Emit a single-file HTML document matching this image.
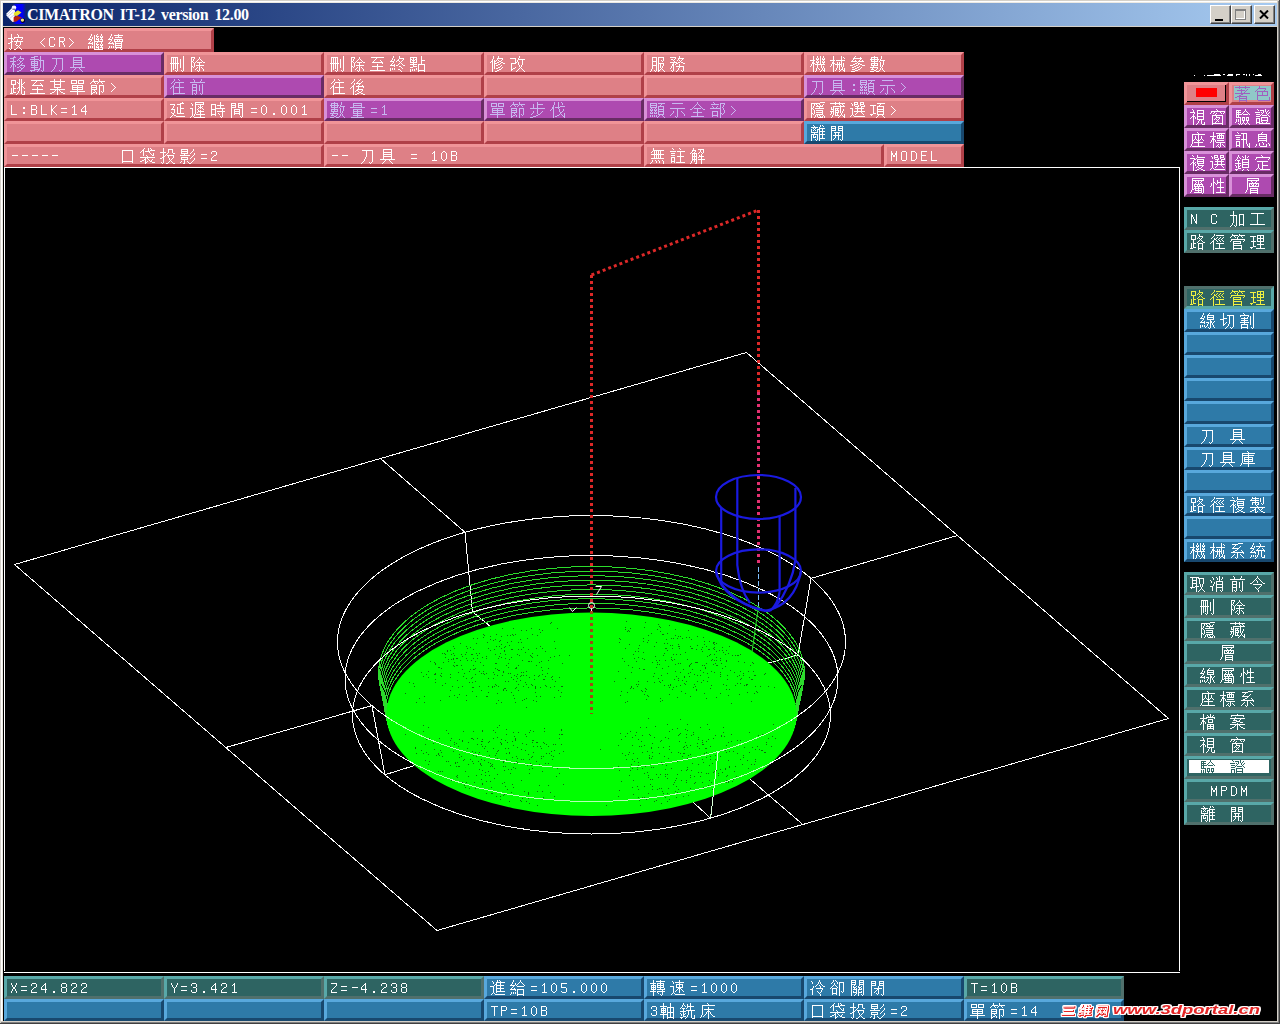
<!DOCTYPE html>
<html lang="zh-TW">
<head>
<meta charset="utf-8">
<title>CIMATRON IT-12 version 12.00</title>
<style>
html,body{margin:0;padding:0;}
body{width:1280px;height:1024px;background:#000;position:relative;overflow:hidden;font-family:"Liberation Mono","Liberation Serif",serif;}
.abs{position:absolute;}
.b{position:absolute;box-sizing:border-box;border:3px solid;font:16.66px/17px "Liberation Mono","Liberation Serif",serif;letter-spacing:0;color:#fff;white-space:pre;padding:1px 0 0 3px;}
.g{display:inline-block;width:20px;height:16px;vertical-align:top;position:relative;top:0;overflow:hidden;font-style:normal;font-size:16px;line-height:16px;letter-spacing:0;background:currentColor;-webkit-text-fill-color:transparent;}
.h{width:10px;top:-1px;}
.g2D{clip-path:path("M2 8h6v1h-6z")}
.g2E{clip-path:path("M3 12h2v2h-2z")}
.g30{clip-path:path("M3 4h2v1h-2zM5 5h1v1h-1zM2 5h1v1h-1zM6 6h1v6h-1zM1 6h1v6h-1zM5 12h1v1h-1zM2 12h1v1h-1zM3 13h2v1h-2z")}
.g31{clip-path:path("M4 4h1v1h-1zM3 5h2v1h-2zM2 6h1v1h-1zM4 6h1v7h-1zM2 13h5v1h-5z")}
.g32{clip-path:path("M2 4h4v1h-4zM1 5h1v2h-1zM6 5h1v3h-1zM4 8h2v1h-2zM3 9h1v1h-1zM2 10h1v1h-1zM1 11h1v2h-1zM1 13h6v1h-6z")}
.g33{clip-path:path("M2 4h4v1h-4zM1 5h1v2h-1zM6 5h1v3h-1zM3 8h3v1h-3zM6 9h1v4h-1zM1 11h1v2h-1zM2 13h4v1h-4z")}
.g34{clip-path:path("M5 4h1v1h-1zM4 5h2v1h-2zM3 6h1v1h-1zM2 7h1v1h-1zM5 6h1v4h-1zM1 8h1v2h-1zM1 10h6v1h-6zM5 11h1v3h-1z")}
.g35{clip-path:path("M1 4h6v1h-6zM1 5h1v3h-1zM1 8h5v1h-5zM6 9h1v4h-1zM1 12h1v1h-1zM2 13h4v1h-4z")}
.g38{clip-path:path("M2 4h4v1h-4zM6 5h1v3h-1zM1 5h1v3h-1zM2 8h4v1h-4zM6 9h1v4h-1zM1 9h1v4h-1zM2 13h4v1h-4z")}
.g3A{clip-path:path("M3 6h2v2h-2zM3 11h2v2h-2z")}
.g3C{clip-path:path("M6 5h1v1h-1zM5 6h1v1h-1zM4 7h1v1h-1zM3 8h1v1h-1zM2 9h1v1h-1zM3 10h1v1h-1zM4 11h1v1h-1zM5 12h1v1h-1zM6 13h1v1h-1z")}
.g3D{clip-path:path("M1 7h6v1h-6zM1 11h6v1h-6z")}
.g3E{clip-path:path("M1 5h1v1h-1zM2 6h1v1h-1zM3 7h1v1h-1zM4 8h1v1h-1zM5 9h1v1h-1zM4 10h1v1h-1zM3 11h1v1h-1zM2 12h1v1h-1zM1 13h1v1h-1z")}
.g42{clip-path:path("M1 4h5v1h-5zM6 5h1v3h-1zM1 5h1v3h-1zM1 8h5v1h-5zM6 9h1v4h-1zM1 9h1v4h-1zM1 13h5v1h-5z")}
.g43{clip-path:path("M2 4h4v1h-4zM6 5h1v2h-1zM1 5h1v8h-1zM6 11h1v2h-1zM2 13h4v1h-4z")}
.g44{clip-path:path("M1 4h4v1h-4zM5 5h1v1h-1zM6 6h1v6h-1zM1 5h1v8h-1zM5 12h1v1h-1zM1 13h4v1h-4z")}
.g45{clip-path:path("M1 4h6v1h-6zM1 5h1v3h-1zM1 8h5v1h-5zM1 9h1v4h-1zM1 13h6v1h-6z")}
.g4B{clip-path:path("M6 4h1v1h-1zM5 5h1v1h-1zM4 6h1v1h-1zM1 4h1v4h-1zM3 7h1v1h-1zM1 8h2v2h-2zM3 10h1v1h-1zM4 11h1v1h-1zM5 12h1v1h-1zM1 10h1v4h-1zM6 13h1v1h-1z")}
.g4C{clip-path:path("M1 4h1v9h-1zM1 13h6v1h-6z")}
.g4D{clip-path:path("M6 4h1v2h-1zM1 4h1v2h-1zM1 6h2v2h-2zM5 6h2v2h-2zM3 8h2v2h-2zM6 8h1v6h-1zM1 8h1v6h-1z")}
.g4E{clip-path:path("M1 4h1v1h-1zM1 5h2v2h-2zM3 7h1v2h-1zM6 4h1v7h-1zM4 9h1v2h-1zM5 11h2v2h-2zM1 7h1v7h-1zM6 13h1v1h-1z")}
.g4F{clip-path:path("M2 4h4v1h-4zM6 5h1v8h-1zM1 5h1v8h-1zM2 13h4v1h-4z")}
.g50{clip-path:path("M1 4h5v1h-5zM6 5h1v3h-1zM1 5h1v3h-1zM1 8h5v1h-5zM1 9h1v5h-1z")}
.g52{clip-path:path("M1 4h5v1h-5zM6 5h1v3h-1zM1 5h1v3h-1zM1 8h5v1h-5zM4 9h1v1h-1zM5 10h1v2h-1zM1 9h1v5h-1zM6 12h1v2h-1z")}
.g54{clip-path:path("M1 4h7v1h-7zM4 5h1v9h-1z")}
.g58{clip-path:path("M6 4h1v2h-1zM1 4h1v2h-1zM5 6h1v2h-1zM2 6h1v2h-1zM3 8h2v2h-2zM5 10h1v2h-1zM2 10h1v2h-1zM6 12h1v2h-1zM1 12h1v2h-1z")}
.g59{clip-path:path("M1 4h1v2h-1zM7 4h1v2h-1zM6 6h1v2h-1zM2 6h1v2h-1zM3 8h1v1h-1zM5 8h1v1h-1zM4 9h1v5h-1z")}
.g5A{clip-path:path("M1 4h6v1h-6zM6 5h1v2h-1zM5 7h1v1h-1zM4 8h1v1h-1zM3 9h1v1h-1zM2 10h1v1h-1zM1 11h1v2h-1zM1 13h6v1h-6z")}
.g4E09{clip-path:path("M1 2h13v1h-13zM2 7h11v1h-11zM0 13h15v1h-15z")}
.g4EE4{clip-path:path("M7 0h1v2h-1zM6 2h1v1h-1zM8 2h1v1h-1zM9 3h1v1h-1zM5 3h1v1h-1zM10 4h1v1h-1zM6 4h1v1h-1zM4 4h1v1h-1zM3 5h1v1h-1zM11 5h1v1h-1zM7 5h1v2h-1zM12 6h1v1h-1zM2 6h1v1h-1zM13 7h2v1h-2zM0 7h2v1h-2zM3 8h9v1h-9zM11 9h1v1h-1zM10 10h1v1h-1zM9 11h1v1h-1zM5 11h1v1h-1zM6 12h1v1h-1zM8 12h1v1h-1zM7 13h1v1h-1zM8 14h1v2h-1z")}
.g4F10{clip-path:path("M11 0h1v1h-1zM4 0h1v3h-1zM12 1h1v2h-1zM8 0h1v5h-1zM3 3h1v2h-1zM10 4h5v1h-5zM5 5h5v1h-5zM2 5h2v2h-2zM8 6h1v1h-1zM1 7h1v1h-1zM13 7h1v2h-1zM0 8h1v1h-1zM9 7h1v3h-1zM12 9h1v1h-1zM10 10h2v1h-2zM10 11h1v1h-1zM9 12h1v1h-1zM11 12h1v1h-1zM14 11h1v3h-1zM12 13h1v1h-1zM7 13h2v1h-2zM13 14h2v1h-2zM5 14h2v1h-2zM3 7h1v9h-1zM14 15h1v1h-1z")}
.g4FEE{clip-path:path("M8 0h1v2h-1zM3 0h1v3h-1zM7 2h6v1h-6zM12 3h1v1h-1zM7 3h1v1h-1zM2 3h1v2h-1zM11 4h1v1h-1zM8 4h1v1h-1zM6 4h1v1h-1zM4 4h1v1h-1zM1 5h2v1h-2zM9 5h2v1h-2zM4 5h2v1h-2zM0 6h1v1h-1zM11 6h2v1h-2zM7 6h2v1h-2zM4 6h1v1h-1zM13 7h2v1h-2zM10 7h1v1h-1zM4 7h3v1h-3zM8 8h2v1h-2zM11 9h1v1h-1zM6 9h2v1h-2zM10 10h1v1h-1zM8 11h2v1h-2zM12 11h1v1h-1zM4 8h1v5h-1zM11 12h1v1h-1zM6 12h2v1h-2zM9 13h2v1h-2zM7 14h2v1h-2zM2 6h1v10h-1zM5 15h2v1h-2z")}
.g5168{clip-path:path("M7 0h1v2h-1zM6 2h1v1h-1zM8 2h1v1h-1zM9 3h1v1h-1zM5 3h1v1h-1zM10 4h1v1h-1zM4 4h1v1h-1zM3 5h1v1h-1zM11 5h1v1h-1zM4 6h7v1h-7zM12 6h1v1h-1zM2 6h1v1h-1zM13 7h2v1h-2zM0 7h2v1h-2zM7 7h1v3h-1zM3 10h9v1h-9zM7 11h1v3h-1zM1 14h13v1h-13z")}
.g5177{clip-path:path("M3 1h9v1h-9zM3 2h1v2h-1zM11 2h1v2h-1zM3 4h9v1h-9zM3 5h1v1h-1zM11 5h1v1h-1zM3 6h9v1h-9zM3 7h1v1h-1zM11 7h1v1h-1zM3 8h9v1h-9zM3 9h1v2h-1zM11 9h1v2h-1zM0 11h15v1h-15zM9 12h1v1h-1zM5 12h1v1h-1zM10 13h1v1h-1zM4 13h1v1h-1zM3 14h1v1h-1zM11 14h1v1h-1zM12 15h1v1h-1zM2 15h1v1h-1z")}
.g51B7{clip-path:path("M9 0h1v2h-1zM1 1h1v1h-1zM10 2h1v2h-1zM2 2h1v2h-1zM8 2h1v2h-1zM11 4h1v1h-1zM7 4h1v1h-1zM12 5h1v1h-1zM6 5h1v1h-1zM9 5h1v1h-1zM13 6h2v1h-2zM5 6h1v1h-1zM3 6h1v2h-1zM10 6h1v2h-1zM6 8h7v1h-7zM2 8h1v1h-1zM12 9h1v1h-1zM0 9h3v1h-3zM11 10h1v2h-1zM7 11h1v1h-1zM10 12h1v1h-1zM8 12h1v1h-1zM9 13h1v1h-1zM2 10h1v5h-1zM10 14h1v2h-1z")}
.g5200{clip-path:path("M2 2h11v1h-11zM6 3h1v6h-1zM5 9h1v2h-1zM4 11h1v2h-1zM12 3h1v11h-1zM3 13h1v1h-1zM11 14h1v1h-1zM9 14h1v1h-1zM2 14h1v1h-1zM1 15h1v1h-1zM10 15h1v1h-1z")}
.g5207{clip-path:path("M7 2h7v1h-7zM3 0h1v5h-1zM3 5h4v1h-4zM0 6h4v1h-4zM6 9h1v1h-1zM9 3h1v8h-1zM3 7h1v4h-1zM5 10h1v1h-1zM3 11h2v1h-2zM8 11h1v2h-1zM3 12h1v1h-1zM13 3h1v11h-1zM7 13h1v1h-1zM6 14h1v1h-1zM12 14h1v1h-1zM10 14h1v1h-1zM11 15h1v1h-1zM5 15h1v1h-1z")}
.g522A{clip-path:path("M1 1h7v1h-7zM7 2h1v5h-1zM3 2h1v5h-1zM1 2h1v5h-1zM5 2h1v5h-1zM0 7h9v1h-9zM10 3h1v9h-1zM5 8h1v5h-1zM3 8h1v6h-1zM13 0h1v15h-1zM7 8h1v7h-1zM11 14h1v1h-1zM5 14h1v1h-1zM1 8h1v8h-1zM6 15h1v1h-1zM12 15h1v1h-1z")}
.g524D{clip-path:path("M3 0h1v1h-1zM11 0h1v2h-1zM4 1h1v2h-1zM10 2h1v1h-1zM0 3h15v1h-15zM2 5h5v1h-5zM6 6h1v2h-1zM2 6h1v2h-1zM2 8h5v1h-5zM6 9h1v2h-1zM2 9h1v2h-1zM9 6h1v6h-1zM2 11h5v1h-5zM12 5h1v10h-1zM6 12h1v3h-1zM10 14h1v1h-1zM4 14h1v1h-1zM2 12h1v4h-1zM11 15h1v1h-1zM5 15h1v1h-1z")}
.g5272{clip-path:path("M3 0h1v1h-1zM4 1h1v1h-1zM0 2h9v1h-9zM0 3h1v1h-1zM8 3h1v1h-1zM4 4h1v1h-1zM7 4h1v1h-1zM1 5h7v1h-7zM4 6h1v1h-1zM1 7h7v1h-7zM4 8h1v1h-1zM0 9h9v1h-9zM4 10h1v1h-1zM10 3h1v9h-1zM1 11h7v1h-7zM1 12h1v2h-1zM7 12h1v2h-1zM13 0h1v15h-1zM11 14h1v1h-1zM1 14h7v1h-7zM1 15h1v1h-1zM12 15h1v1h-1zM7 15h1v1h-1z")}
.g52A0{clip-path:path("M3 0h1v4h-1zM9 3h5v1h-5zM0 4h7v1h-7zM3 5h1v7h-1zM9 4h1v9h-1zM13 4h1v9h-1zM2 12h1v2h-1zM9 13h5v1h-5zM6 5h1v10h-1zM13 14h1v1h-1zM1 14h1v1h-1zM9 14h1v1h-1zM4 14h1v1h-1zM0 15h1v1h-1zM5 15h1v1h-1z")}
.g52D5{clip-path:path("M4 0h4v1h-4zM1 1h4v1h-4zM4 2h1v1h-1zM10 0h1v4h-1zM0 3h9v1h-9zM9 4h5v1h-5zM4 4h1v1h-1zM1 5h7v1h-7zM7 6h1v1h-1zM1 6h1v1h-1zM4 6h1v1h-1zM1 7h7v1h-7zM7 8h1v1h-1zM1 8h1v1h-1zM4 8h1v1h-1zM1 9h7v1h-7zM4 10h1v1h-1zM10 5h1v7h-1zM1 11h7v1h-7zM9 12h1v1h-1zM4 12h1v1h-1zM4 13h6v1h-6zM13 5h1v10h-1zM11 14h1v1h-1zM0 14h5v1h-5zM8 14h1v1h-1zM1 15h1v1h-1zM12 15h1v1h-1zM7 15h1v1h-1z")}
.g52D9{clip-path:path("M9 0h1v2h-1zM0 1h6v1h-6zM5 2h1v1h-1zM8 2h6v1h-6zM12 3h1v1h-1zM1 3h2v1h-2zM4 3h1v1h-1zM8 3h1v1h-1zM3 4h1v1h-1zM9 4h1v1h-1zM7 4h1v1h-1zM11 4h1v1h-1zM10 5h1v1h-1zM4 5h1v1h-1zM0 6h7v1h-7zM11 6h2v1h-2zM8 6h2v1h-2zM3 7h1v1h-1zM13 7h2v1h-2zM6 7h2v1h-2zM5 8h1v1h-1zM9 8h1v2h-1zM2 8h2v2h-2zM6 10h8v1h-8zM1 10h1v2h-1zM9 11h1v1h-1zM0 12h1v1h-1zM8 12h1v2h-1zM3 10h1v5h-1zM13 11h1v4h-1zM11 14h1v1h-1zM7 14h1v1h-1zM1 14h1v1h-1zM6 15h1v1h-1zM12 15h1v1h-1zM2 15h1v1h-1z")}
.g537B{clip-path:path("M5 0h1v1h-1zM3 0h1v2h-1zM6 1h1v1h-1zM9 2h5v1h-5zM2 2h1v1h-1zM7 2h1v2h-1zM1 3h1v1h-1zM4 3h1v2h-1zM3 5h1v1h-1zM5 5h1v1h-1zM6 6h1v1h-1zM2 6h1v1h-1zM1 7h1v1h-1zM7 7h1v1h-1zM0 8h1v1h-1zM2 8h5v1h-5zM13 3h1v9h-1zM11 11h1v1h-1zM6 9h1v4h-1zM2 9h1v4h-1zM12 12h1v1h-1zM2 13h5v1h-5zM6 14h1v1h-1zM2 14h1v1h-1zM9 3h1v13h-1z")}
.g53C3{clip-path:path("M5 0h1v1h-1zM10 1h1v1h-1zM4 1h1v1h-1zM3 2h9v1h-9zM3 3h1v1h-1zM10 3h1v1h-1zM12 4h1v1h-1zM5 4h1v1h-1zM9 4h1v1h-1zM2 4h1v1h-1zM1 5h6v1h-6zM8 5h6v1h-6zM7 6h1v1h-1zM8 7h2v1h-2zM5 7h2v1h-2zM3 8h2v1h-2zM10 8h2v1h-2zM8 8h1v1h-1zM6 9h2v1h-2zM0 9h3v1h-3zM12 9h3v1h-3zM9 10h1v1h-1zM4 10h2v1h-2zM11 11h1v1h-1zM7 11h2v1h-2zM2 11h2v1h-2zM10 12h1v1h-1zM5 12h2v1h-2zM2 13h3v1h-3zM8 13h2v1h-2zM5 14h3v1h-3zM1 15h4v1h-4z")}
.g53D6{clip-path:path("M0 1h9v1h-9zM8 2h6v1h-6zM6 2h1v2h-1zM2 2h1v2h-1zM2 4h5v1h-5zM6 5h1v2h-1zM2 5h1v2h-1zM9 3h1v5h-1zM13 3h1v5h-1zM2 7h5v1h-5zM6 8h1v2h-1zM12 8h1v3h-1zM10 8h1v3h-1zM2 8h1v3h-1zM5 10h4v1h-4zM0 11h5v1h-5zM11 11h1v2h-1zM1 12h1v1h-1zM12 13h1v1h-1zM10 13h1v1h-1zM9 14h1v1h-1zM13 14h1v1h-1zM6 11h1v5h-1zM14 15h1v1h-1zM8 15h1v1h-1z")}
.g53E3{clip-path:path("M2 2h11v1h-11zM12 3h1v10h-1zM2 3h1v10h-1zM2 13h11v1h-11zM12 14h1v1h-1zM2 14h1v1h-1z")}
.g55AE{clip-path:path("M1 1h6v1h-6zM8 1h6v1h-6zM6 2h1v2h-1zM1 2h1v2h-1zM13 2h1v2h-1zM8 2h1v2h-1zM1 4h6v1h-6zM8 4h6v1h-6zM2 6h11v1h-11zM12 7h1v1h-1zM7 7h1v1h-1zM2 7h1v1h-1zM2 8h11v1h-11zM12 9h1v1h-1zM7 9h1v1h-1zM2 9h1v1h-1zM2 10h11v1h-11zM7 11h1v1h-1zM0 12h15v1h-15zM7 13h1v3h-1z")}
.g5B9A{clip-path:path("M6 0h1v1h-1zM7 1h1v1h-1zM1 2h14v1h-14zM14 3h1v1h-1zM1 3h1v1h-1zM0 4h1v1h-1zM13 4h1v1h-1zM2 6h11v1h-11zM7 7h1v3h-1zM7 10h6v1h-6zM3 9h1v4h-1zM7 11h1v3h-1zM4 13h1v1h-1zM2 13h1v1h-1zM1 14h1v1h-1zM5 14h10v1h-10zM0 15h1v1h-1z")}
.g5C64{clip-path:path("M2 0h12v1h-12zM2 1h1v1h-1zM13 1h1v1h-1zM2 2h12v1h-12zM11 3h1v1h-1zM6 3h1v1h-1zM10 4h1v1h-1zM7 4h1v1h-1zM4 5h10v1h-10zM11 6h1v1h-1zM8 6h1v1h-1zM6 6h1v1h-1zM13 6h1v2h-1zM4 6h1v2h-1zM10 7h1v1h-1zM7 7h2v1h-2zM4 8h10v1h-10zM5 10h8v1h-8zM2 3h1v9h-1zM5 11h1v1h-1zM12 11h1v1h-1zM5 12h8v1h-8zM1 12h1v2h-1zM12 13h1v1h-1zM5 13h1v1h-1zM0 14h1v1h-1zM5 14h8v1h-8zM12 15h1v1h-1zM5 15h1v1h-1z")}
.g5C6C{clip-path:path("M2 0h12v1h-12zM2 1h1v1h-1zM13 1h1v1h-1zM2 2h12v1h-12zM11 3h1v1h-1zM5 3h1v1h-1zM6 4h1v1h-1zM10 4h1v1h-1zM8 3h1v3h-1zM11 5h1v1h-1zM5 5h1v1h-1zM4 6h9v1h-9zM12 7h1v1h-1zM7 7h1v1h-1zM9 7h1v1h-1zM4 7h1v1h-1zM4 8h10v1h-10zM5 9h1v1h-1zM8 9h1v1h-1zM2 3h1v8h-1zM4 10h8v1h-8zM11 11h1v1h-1zM8 11h1v1h-1zM5 11h1v1h-1zM2 11h2v1h-2zM5 12h7v1h-7zM1 12h1v2h-1zM11 13h1v1h-1zM8 13h1v1h-1zM13 9h1v6h-1zM0 14h1v1h-1zM4 14h8v1h-8zM12 15h1v1h-1z")}
.g5DE5{clip-path:path("M1 2h13v1h-13zM7 3h1v10h-1zM0 13h15v1h-15z")}
.g5E8A{clip-path:path("M7 0h1v1h-1zM8 1h1v1h-1zM2 2h13v1h-13zM8 4h1v2h-1zM4 6h10v1h-10zM8 7h1v1h-1zM7 8h3v1h-3zM6 9h1v2h-1zM10 9h1v2h-1zM2 3h1v9h-1zM11 11h1v1h-1zM5 11h1v1h-1zM12 12h1v1h-1zM4 12h1v1h-1zM1 12h1v2h-1zM3 13h1v1h-1zM13 13h2v1h-2zM0 14h1v1h-1zM8 9h1v7h-1z")}
.g5EA7{clip-path:path("M7 0h1v1h-1zM8 1h1v1h-1zM2 2h13v1h-13zM11 4h1v3h-1zM5 4h1v3h-1zM2 3h1v5h-1zM8 3h1v5h-1zM12 7h1v1h-1zM6 7h1v1h-1zM10 7h1v1h-1zM4 7h1v1h-1zM13 8h1v1h-1zM7 8h3v1h-3zM2 8h2v1h-2zM8 9h1v1h-1zM4 10h9v1h-9zM2 9h1v3h-1zM8 11h1v3h-1zM1 12h1v2h-1zM0 14h1v1h-1zM2 14h13v1h-13z")}
.g5EAB{clip-path:path("M7 0h1v1h-1zM8 1h1v1h-1zM2 2h13v1h-13zM2 3h1v1h-1zM8 3h1v1h-1zM2 4h12v1h-12zM8 5h1v1h-1zM4 6h9v1h-9zM12 7h1v1h-1zM4 7h1v1h-1zM8 7h1v1h-1zM4 8h9v1h-9zM12 9h1v1h-1zM4 9h1v1h-1zM8 9h1v1h-1zM4 10h9v1h-9zM2 5h1v7h-1zM8 11h1v1h-1zM3 12h12v1h-12zM1 12h1v2h-1zM0 14h1v1h-1zM8 13h1v3h-1z")}
.g5EF6{clip-path:path("M12 0h1v1h-1zM10 1h4v1h-4zM7 2h4v1h-4zM0 2h5v1h-5zM4 3h1v1h-1zM10 3h1v3h-1zM3 4h1v2h-1zM10 6h4v1h-4zM2 6h1v1h-1zM1 7h4v1h-4zM7 5h1v6h-1zM10 7h1v4h-1zM4 8h1v3h-1zM1 10h1v1h-1zM7 11h7v1h-7zM2 11h2v1h-2zM3 12h1v1h-1zM2 13h1v1h-1zM4 13h2v1h-2zM1 14h1v1h-1zM6 14h9v1h-9zM0 15h1v1h-1z")}
.g5F71{clip-path:path("M1 1h7v1h-7zM13 1h1v2h-1zM1 2h1v1h-1zM7 2h1v1h-1zM1 3h7v1h-7zM12 3h1v1h-1zM11 4h1v1h-1zM1 4h1v1h-1zM7 4h1v1h-1zM1 5h7v1h-7zM10 5h1v1h-1zM14 5h1v2h-1zM4 6h1v1h-1zM0 7h10v1h-10zM13 7h1v1h-1zM12 8h1v1h-1zM11 9h1v1h-1zM1 9h7v1h-7zM10 10h1v1h-1zM1 10h1v1h-1zM7 10h1v1h-1zM14 10h1v2h-1zM1 11h7v1h-7zM13 12h1v1h-1zM1 13h1v1h-1zM12 13h1v1h-1zM7 13h1v1h-1zM4 12h1v3h-1zM0 14h1v1h-1zM11 14h1v1h-1zM8 14h1v1h-1zM3 15h2v1h-2zM9 15h2v1h-2z")}
.g5F80{clip-path:path("M8 0h1v1h-1zM4 0h1v2h-1zM9 1h1v1h-1zM3 2h1v1h-1zM5 3h9v1h-9zM2 3h1v1h-1zM1 4h1v1h-1zM4 4h1v2h-1zM3 6h1v1h-1zM9 4h1v4h-1zM2 7h2v1h-2zM5 8h9v1h-9zM1 8h1v1h-1zM0 9h1v1h-1zM3 8h1v6h-1zM9 9h1v5h-1zM3 14h12v1h-12zM3 15h1v1h-1z")}
.g5F8C{clip-path:path("M10 0h1v1h-1zM4 0h1v2h-1zM9 1h1v1h-1zM3 2h1v1h-1zM12 2h1v1h-1zM8 2h1v1h-1zM11 3h1v1h-1zM7 3h1v1h-1zM2 3h1v1h-1zM1 4h1v1h-1zM6 4h5v1h-5zM4 4h1v2h-1zM9 5h1v1h-1zM3 6h1v1h-1zM12 6h1v1h-1zM8 6h1v1h-1zM6 7h8v1h-8zM2 7h2v1h-2zM1 8h1v1h-1zM13 8h1v1h-1zM8 8h1v2h-1zM0 9h1v1h-1zM7 10h6v1h-6zM6 11h2v1h-2zM12 11h1v1h-1zM11 12h1v1h-1zM5 12h1v1h-1zM8 12h1v1h-1zM9 13h2v1h-2zM11 14h2v1h-2zM7 14h2v1h-2zM3 8h1v8h-1zM13 15h2v1h-2zM5 15h2v1h-2z")}
.g5F91{clip-path:path("M4 0h1v2h-1zM6 1h8v1h-8zM3 2h1v1h-1zM10 3h1v1h-1zM7 3h1v1h-1zM2 3h1v1h-1zM13 3h1v1h-1zM12 4h1v1h-1zM6 4h1v1h-1zM1 4h1v1h-1zM9 4h1v1h-1zM4 4h1v1h-1zM11 5h1v1h-1zM4 5h2v1h-2zM8 5h1v1h-1zM3 6h1v1h-1zM6 6h1v1h-1zM12 6h1v1h-1zM9 6h1v1h-1zM10 7h1v1h-1zM7 7h1v1h-1zM13 7h1v1h-1zM2 7h2v1h-2zM1 8h1v1h-1zM0 9h1v1h-1zM6 9h8v1h-8zM9 10h1v4h-1zM5 14h10v1h-10zM3 8h1v8h-1z")}
.g6027{clip-path:path("M3 0h1v4h-1zM10 0h1v4h-1zM7 2h1v2h-1zM3 4h2v1h-2zM7 4h7v1h-7zM7 5h1v1h-1zM5 5h1v1h-1zM6 6h1v1h-1zM1 5h1v3h-1zM10 5h1v4h-1zM0 8h1v1h-1zM7 9h7v1h-7zM10 10h1v4h-1zM6 14h9v1h-9zM3 5h1v11h-1z")}
.g606F{clip-path:path("M7 0h1v1h-1zM6 1h1v1h-1zM3 2h9v1h-9zM3 3h1v1h-1zM11 3h1v1h-1zM3 4h9v1h-9zM3 5h1v1h-1zM11 5h1v1h-1zM3 6h9v1h-9zM3 7h1v1h-1zM11 7h1v1h-1zM3 8h9v1h-9zM3 9h1v1h-1zM11 9h1v1h-1zM7 10h1v1h-1zM13 11h1v1h-1zM8 11h1v2h-1zM4 11h1v3h-1zM11 12h1v2h-1zM14 12h1v2h-1zM1 12h1v2h-1zM0 14h1v1h-1zM5 14h7v1h-7z")}
.g6295{clip-path:path("M8 1h5v1h-5zM3 0h1v4h-1zM12 2h1v3h-1zM8 2h1v3h-1zM0 4h6v1h-6zM13 5h2v1h-2zM7 5h1v1h-1zM6 6h1v1h-1zM3 5h1v3h-1zM5 7h1v1h-1zM7 7h7v1h-7zM3 8h2v1h-2zM13 8h1v2h-1zM8 8h1v2h-1zM2 9h2v1h-2zM12 10h1v1h-1zM0 10h2v1h-2zM9 10h1v2h-1zM11 11h1v1h-1zM10 12h1v1h-1zM9 13h1v1h-1zM11 13h1v1h-1zM3 10h1v5h-1zM1 14h1v1h-1zM12 14h1v1h-1zM8 14h1v1h-1zM13 15h2v1h-2zM6 15h2v1h-2zM2 15h1v1h-1z")}
.g6309{clip-path:path("M9 0h1v1h-1zM10 1h1v2h-1zM3 0h1v4h-1zM6 3h9v1h-9zM14 4h1v1h-1zM6 4h1v1h-1zM0 4h5v1h-5zM5 5h1v1h-1zM13 5h1v1h-1zM3 5h1v2h-1zM9 5h1v2h-1zM3 7h2v1h-2zM6 7h9v1h-9zM2 8h2v1h-2zM8 8h1v2h-1zM0 9h2v1h-2zM12 8h1v3h-1zM7 10h1v1h-1zM8 11h2v1h-2zM11 11h1v1h-1zM10 12h1v1h-1zM9 13h1v1h-1zM11 13h1v1h-1zM3 9h1v6h-1zM1 14h1v1h-1zM12 14h1v1h-1zM8 14h1v1h-1zM6 15h2v1h-2zM2 15h1v1h-1zM13 15h1v1h-1z")}
.g6539{clip-path:path("M9 0h1v2h-1zM8 2h1v1h-1zM0 2h6v1h-6zM8 3h7v1h-7zM5 3h1v3h-1zM7 4h1v2h-1zM5 6h2v1h-2zM1 7h5v1h-5zM12 4h1v5h-1zM8 6h1v3h-1zM11 9h1v2h-1zM9 9h1v2h-1zM10 11h1v1h-1zM5 11h1v1h-1zM1 8h1v5h-1zM11 12h1v1h-1zM9 12h1v1h-1zM3 12h2v1h-2zM12 13h1v1h-1zM1 13h2v1h-2zM8 13h1v1h-1zM1 14h1v1h-1zM7 14h1v1h-1zM13 14h1v1h-1zM14 15h1v1h-1zM6 15h1v1h-1z")}
.g6578{clip-path:path("M4 0h1v1h-1zM1 1h7v1h-7zM11 0h1v3h-1zM1 2h1v1h-1zM4 2h1v1h-1zM7 2h1v1h-1zM10 3h1v1h-1zM0 3h9v1h-9zM1 4h1v1h-1zM4 4h1v1h-1zM10 4h5v1h-5zM7 4h1v1h-1zM1 5h7v1h-7zM9 5h1v1h-1zM4 6h1v1h-1zM1 7h7v1h-7zM13 5h1v4h-1zM7 8h1v1h-1zM1 8h1v1h-1zM4 8h1v1h-1zM1 9h7v1h-7zM10 6h1v5h-1zM12 9h1v2h-1zM3 10h1v1h-1zM11 11h1v1h-1zM0 11h8v1h-8zM7 12h1v1h-1zM2 12h1v1h-1zM10 12h1v2h-1zM12 12h1v2h-1zM6 13h1v1h-1zM1 13h3v1h-3zM13 14h1v1h-1zM9 14h1v1h-1zM4 14h2v1h-2zM14 15h1v1h-1zM6 15h3v1h-3zM0 15h4v1h-4z")}
.g6642{clip-path:path("M10 0h1v3h-1zM1 2h5v1h-5zM7 3h7v1h-7zM5 3h1v3h-1zM10 4h1v2h-1zM1 3h1v4h-1zM5 6h10v1h-10zM1 7h5v1h-5zM12 7h1v2h-1zM7 9h8v1h-8zM1 8h1v4h-1zM5 8h1v4h-1zM8 11h1v1h-1zM9 12h1v1h-1zM1 12h5v1h-5zM1 13h1v1h-1zM5 13h1v1h-1zM12 10h1v5h-1zM10 14h1v1h-1zM11 15h1v1h-1z")}
.g670D{clip-path:path("M2 1h5v1h-5zM8 1h6v1h-6zM6 2h1v3h-1zM2 2h1v3h-1zM13 2h1v3h-1zM11 4h1v1h-1zM12 5h1v1h-1zM2 5h5v1h-5zM8 2h1v5h-1zM8 7h6v1h-6zM6 6h1v3h-1zM2 6h1v3h-1zM13 8h1v2h-1zM2 9h5v1h-5zM10 8h1v4h-1zM12 10h1v2h-1zM2 10h1v3h-1zM11 12h1v1h-1zM8 8h1v6h-1zM12 13h1v1h-1zM10 13h1v1h-1zM6 10h1v5h-1zM1 13h1v2h-1zM13 14h1v1h-1zM8 14h2v1h-2zM4 14h1v1h-1zM0 15h1v1h-1zM14 15h1v1h-1zM5 15h1v1h-1zM8 15h1v1h-1z")}
.g67D0{clip-path:path("M10 0h1v2h-1zM4 0h1v2h-1zM0 2h15v1h-15zM10 3h1v2h-1zM4 3h1v2h-1zM4 5h7v1h-7zM10 6h1v2h-1zM4 6h1v2h-1zM4 8h7v1h-7zM7 9h1v1h-1zM0 10h15v1h-15zM9 11h1v1h-1zM5 11h1v1h-1zM10 12h1v1h-1zM4 12h1v1h-1zM11 13h2v1h-2zM2 13h2v1h-2zM13 14h2v1h-2zM0 14h2v1h-2zM7 11h1v5h-1z")}
.g6848{clip-path:path("M7 0h1v1h-1zM1 1h13v1h-13zM1 2h1v1h-1zM13 2h1v1h-1zM5 3h1v1h-1zM0 4h15v1h-15zM10 5h1v1h-1zM4 5h1v1h-1zM9 6h1v1h-1zM3 6h4v1h-4zM6 7h4v1h-4zM2 8h4v1h-4zM10 8h3v1h-3zM7 9h1v1h-1zM0 10h15v1h-15zM9 11h1v1h-1zM5 11h1v1h-1zM10 12h1v1h-1zM4 12h1v1h-1zM11 13h2v1h-2zM2 13h2v1h-2zM13 14h2v1h-2zM0 14h2v1h-2zM7 11h1v5h-1z")}
.g68B0{clip-path:path("M13 1h1v1h-1zM14 2h1v1h-1zM3 0h1v4h-1zM11 0h1v4h-1zM6 4h9v1h-9zM0 4h5v1h-5zM3 5h1v1h-1zM2 6h2v1h-2zM11 5h1v3h-1zM9 6h1v2h-1zM7 6h1v2h-1zM2 7h3v1h-3zM5 8h7v1h-7zM1 8h1v2h-1zM13 7h1v4h-1zM11 9h1v2h-1zM0 10h1v1h-1zM7 9h1v3h-1zM12 11h1v2h-1zM9 9h1v5h-1zM6 12h1v2h-1zM14 12h1v2h-1zM11 13h2v1h-2zM13 14h2v1h-2zM10 14h1v1h-1zM5 14h1v1h-1zM3 8h1v8h-1zM9 15h1v1h-1zM14 15h1v1h-1z")}
.g6A19{clip-path:path("M6 1h9v1h-9zM9 2h1v1h-1zM11 2h1v1h-1zM3 0h1v4h-1zM7 3h7v1h-7zM0 4h6v1h-6zM11 4h1v2h-1zM7 4h1v2h-1zM13 4h1v2h-1zM9 4h1v2h-1zM3 5h1v1h-1zM7 6h7v1h-7zM2 6h2v1h-2zM2 7h3v1h-3zM7 8h7v1h-7zM1 8h1v2h-1zM5 8h1v2h-1zM0 10h1v1h-1zM6 10h9v1h-9zM12 12h1v1h-1zM8 12h1v1h-1zM7 13h1v1h-1zM13 13h1v1h-1zM10 11h1v4h-1zM8 14h1v1h-1zM6 14h1v1h-1zM14 14h1v1h-1zM3 8h1v8h-1zM9 15h1v1h-1z")}
.g6A5F{clip-path:path("M7 0h1v2h-1zM13 0h1v2h-1zM12 2h1v1h-1zM8 2h1v1h-1zM6 2h1v1h-1zM14 2h1v1h-1zM3 0h1v4h-1zM6 3h3v1h-3zM12 3h3v1h-3zM13 4h1v1h-1zM7 4h1v1h-1zM0 4h5v1h-5zM12 5h1v1h-1zM8 5h1v1h-1zM3 5h1v1h-1zM6 5h1v1h-1zM14 5h1v1h-1zM6 6h3v1h-3zM12 6h3v1h-3zM2 6h2v1h-2zM10 0h1v8h-1zM2 7h3v1h-3zM7 7h1v1h-1zM13 7h1v1h-1zM5 8h10v1h-10zM1 8h1v2h-1zM0 10h1v1h-1zM7 9h1v3h-1zM11 9h1v3h-1zM13 10h1v2h-1zM8 12h1v1h-1zM12 12h1v2h-1zM14 12h1v2h-1zM9 13h1v1h-1zM6 12h1v3h-1zM13 14h2v1h-2zM11 14h1v1h-1zM3 8h1v8h-1zM14 15h1v1h-1zM10 15h1v1h-1zM5 15h1v1h-1z")}
.g6A94{clip-path:path("M7 1h1v1h-1zM13 1h1v1h-1zM10 0h1v3h-1zM12 2h1v1h-1zM8 2h1v1h-1zM3 0h1v4h-1zM6 3h9v1h-9zM14 4h1v1h-1zM0 4h7v1h-7zM3 5h1v1h-1zM8 5h5v1h-5zM2 6h2v1h-2zM8 6h1v2h-1zM12 6h1v2h-1zM2 7h3v1h-3zM8 8h5v1h-5zM1 8h1v2h-1zM5 8h1v2h-1zM0 10h1v1h-1zM7 10h7v1h-7zM10 11h1v1h-1zM7 11h1v1h-1zM13 11h1v1h-1zM7 12h7v1h-7zM10 13h1v1h-1zM7 13h1v1h-1zM13 13h1v1h-1zM7 14h7v1h-7zM3 8h1v8h-1zM7 15h1v1h-1zM13 15h1v1h-1z")}
.g6B65{clip-path:path("M7 0h1v2h-1zM7 2h6v1h-6zM3 2h1v4h-1zM7 3h1v3h-1zM0 6h15v1h-15zM12 9h1v1h-1zM3 9h1v2h-1zM11 10h1v1h-1zM7 7h1v5h-1zM10 11h1v1h-1zM2 11h1v1h-1zM8 12h2v1h-2zM1 12h1v1h-1zM6 13h2v1h-2zM3 14h3v1h-3zM0 15h3v1h-3z")}
.g6D88{clip-path:path("M6 1h1v1h-1zM2 1h1v1h-1zM12 1h1v2h-1zM3 2h1v2h-1zM7 2h1v2h-1zM11 3h1v1h-1zM9 0h1v5h-1zM0 4h1v1h-1zM6 5h7v1h-7zM1 5h1v2h-1zM6 6h1v2h-1zM12 6h1v2h-1zM4 6h1v2h-1zM6 8h7v1h-7zM3 8h1v2h-1zM6 9h1v2h-1zM12 9h1v2h-1zM0 10h3v1h-3zM6 11h7v1h-7zM2 11h1v4h-1zM12 12h1v3h-1zM10 14h1v1h-1zM6 12h1v4h-1zM11 15h1v1h-1z")}
.g7121{clip-path:path("M3 0h1v2h-1zM3 2h11v1h-11zM2 3h1v1h-1zM1 4h1v1h-1zM8 3h1v3h-1zM6 3h1v3h-1zM10 3h1v3h-1zM4 3h1v3h-1zM1 6h13v1h-13zM10 7h1v3h-1zM6 7h1v3h-1zM4 7h1v3h-1zM8 7h1v3h-1zM1 10h13v1h-13zM5 12h1v1h-1zM12 12h1v1h-1zM8 12h1v1h-1zM2 12h1v2h-1zM6 13h1v2h-1zM9 13h1v2h-1zM1 14h1v1h-1zM13 13h1v3h-1zM0 15h1v1h-1z")}
.g7406{clip-path:path("M7 1h7v1h-7zM0 2h6v1h-6zM10 2h1v2h-1zM7 2h1v2h-1zM13 2h1v2h-1zM7 4h7v1h-7zM3 3h1v4h-1zM10 5h1v2h-1zM7 5h1v2h-1zM13 5h1v2h-1zM7 7h7v1h-7zM1 7h5v1h-5zM10 8h1v2h-1zM7 10h7v1h-7zM3 8h1v4h-1zM3 12h3v1h-3zM10 11h1v3h-1zM0 13h3v1h-3zM1 14h1v1h-1zM6 14h9v1h-9z")}
.g793A{clip-path:path("M2 1h11v1h-11zM0 6h15v1h-15zM11 9h1v1h-1zM3 9h1v2h-1zM12 10h1v1h-1zM2 11h1v1h-1zM13 11h1v1h-1zM1 12h1v1h-1zM14 12h1v2h-1zM0 13h1v1h-1zM7 7h1v8h-1zM5 14h1v1h-1zM6 15h1v1h-1z")}
.g79FB{clip-path:path("M4 0h1v1h-1zM10 0h1v2h-1zM3 1h3v1h-3zM9 2h5v1h-5zM0 2h4v1h-4zM13 3h1v1h-1zM8 3h1v1h-1zM3 3h1v2h-1zM12 4h1v1h-1zM9 4h1v1h-1zM7 4h1v1h-1zM10 5h2v1h-2zM0 5h6v1h-6zM3 6h1v1h-1zM10 6h1v1h-1zM12 7h1v1h-1zM9 7h1v1h-1zM2 7h2v1h-2zM2 8h3v1h-3zM7 8h2v1h-2zM11 8h1v1h-1zM10 9h5v1h-5zM1 9h1v2h-1zM5 9h1v2h-1zM14 10h1v1h-1zM9 10h1v1h-1zM0 11h1v1h-1zM13 11h1v1h-1zM10 11h1v1h-1zM7 11h2v1h-2zM11 12h2v1h-2zM11 13h1v1h-1zM9 14h2v1h-2zM3 9h1v7h-1zM7 15h2v1h-2z")}
.g7A97{clip-path:path("M6 0h1v1h-1zM7 1h1v1h-1zM1 2h14v1h-14zM10 3h1v1h-1zM1 3h1v1h-1zM4 3h1v1h-1zM14 3h1v1h-1zM0 4h1v1h-1zM11 4h1v1h-1zM13 4h1v1h-1zM3 4h1v1h-1zM6 4h1v1h-1zM5 5h1v1h-1zM2 6h11v1h-11zM6 7h1v1h-1zM6 8h4v1h-4zM5 9h1v1h-1zM9 9h1v1h-1zM8 10h1v1h-1zM6 10h1v1h-1zM4 10h1v1h-1zM7 11h1v1h-1zM6 12h1v1h-1zM8 12h1v1h-1zM12 7h1v7h-1zM2 7h1v7h-1zM5 13h1v1h-1zM2 14h11v1h-11zM12 15h1v1h-1zM2 15h1v1h-1z")}
.g7BA1{clip-path:path("M9 0h1v1h-1zM2 0h1v1h-1zM9 1h6v1h-6zM2 1h6v1h-6zM11 2h1v1h-1zM1 2h1v1h-1zM4 2h1v1h-1zM8 2h1v1h-1zM0 3h1v1h-1zM12 3h1v1h-1zM5 3h1v1h-1zM7 3h1v2h-1zM1 5h14v1h-14zM14 6h1v1h-1zM1 6h1v1h-1zM0 7h1v1h-1zM3 7h8v1h-8zM13 7h1v1h-1zM3 8h1v1h-1zM10 8h1v1h-1zM3 9h8v1h-8zM3 10h1v1h-1zM3 11h9v1h-9zM3 12h1v2h-1zM11 12h1v2h-1zM3 14h9v1h-9zM3 15h1v1h-1zM11 15h1v1h-1z")}
.g7BC0{clip-path:path("M3 0h1v2h-1zM9 0h1v2h-1zM9 2h6v1h-6zM2 2h6v1h-6zM11 3h1v1h-1zM1 3h1v1h-1zM4 3h1v1h-1zM8 3h1v1h-1zM0 4h1v1h-1zM12 4h1v1h-1zM7 4h1v1h-1zM5 4h1v1h-1zM1 6h6v1h-6zM9 6h5v1h-5zM6 7h1v1h-1zM1 7h1v1h-1zM1 8h6v1h-6zM6 9h1v1h-1zM1 9h1v1h-1zM1 10h6v1h-6zM4 11h1v1h-1zM13 7h1v6h-1zM11 12h1v1h-1zM5 12h1v1h-1zM1 11h1v3h-1zM12 13h1v1h-1zM3 13h2v1h-2zM6 13h1v2h-1zM1 14h2v1h-2zM9 7h1v9h-1zM1 15h1v1h-1z")}
.g7CFB{clip-path:path("M8 0h5v1h-5zM2 1h6v1h-6zM5 2h1v1h-1zM10 3h1v1h-1zM4 3h1v1h-1zM3 4h1v1h-1zM9 4h1v1h-1zM2 5h7v1h-7zM7 6h1v1h-1zM11 7h1v1h-1zM5 7h2v1h-2zM3 8h2v1h-2zM12 8h1v1h-1zM1 9h13v1h-13zM13 10h1v1h-1zM10 11h1v1h-1zM4 11h1v1h-1zM3 12h1v1h-1zM11 12h1v1h-1zM12 13h1v1h-1zM2 13h1v1h-1zM7 10h1v5h-1zM1 14h1v1h-1zM5 14h1v1h-1zM13 14h1v1h-1zM6 15h1v1h-1z")}
.g7D42{clip-path:path("M3 0h1v2h-1zM9 0h1v2h-1zM9 2h5v1h-5zM2 2h1v2h-1zM13 3h1v1h-1zM8 3h1v1h-1zM4 3h1v2h-1zM1 4h1v1h-1zM12 4h1v1h-1zM7 4h2v1h-2zM11 5h1v1h-1zM6 5h1v1h-1zM9 5h1v1h-1zM0 5h4v1h-4zM3 6h1v1h-1zM10 6h1v1h-1zM11 7h1v1h-1zM9 7h1v1h-1zM2 7h1v1h-1zM1 8h1v1h-1zM12 8h1v1h-1zM4 8h1v1h-1zM8 8h1v1h-1zM13 9h2v1h-2zM6 9h2v1h-2zM0 9h5v1h-5zM4 10h1v1h-1zM9 10h2v1h-2zM11 11h1v1h-1zM12 12h1v1h-1zM4 12h1v2h-1zM2 12h1v2h-1zM8 13h2v1h-2zM0 12h1v3h-1zM10 14h1v1h-1zM11 15h1v1h-1z")}
.g7D66{clip-path:path("M3 0h1v2h-1zM10 0h1v2h-1zM11 2h1v1h-1zM9 2h1v1h-1zM2 2h1v2h-1zM12 3h1v1h-1zM8 3h1v1h-1zM5 3h1v2h-1zM1 4h1v1h-1zM7 4h1v1h-1zM13 4h1v1h-1zM14 5h1v1h-1zM6 5h1v1h-1zM0 5h5v1h-5zM3 6h1v1h-1zM7 6h7v1h-7zM2 7h1v1h-1zM1 8h1v1h-1zM4 8h1v1h-1zM7 9h7v1h-7zM0 9h6v1h-6zM5 10h1v1h-1zM7 10h1v4h-1zM13 10h1v4h-1zM3 12h1v2h-1zM1 12h1v2h-1zM5 12h1v2h-1zM0 14h1v1h-1zM7 14h7v1h-7zM7 15h1v1h-1zM13 15h1v1h-1z")}
.g7D71{clip-path:path("M9 0h1v1h-1zM3 0h1v2h-1zM10 1h1v2h-1zM2 2h1v2h-1zM6 3h9v1h-9zM4 3h1v2h-1zM1 4h1v1h-1zM9 4h1v1h-1zM12 5h1v1h-1zM0 5h4v1h-4zM8 5h1v1h-1zM3 6h1v1h-1zM7 6h1v1h-1zM13 6h1v1h-1zM6 7h9v1h-9zM2 7h1v1h-1zM14 8h1v1h-1zM1 8h1v1h-1zM4 8h1v1h-1zM0 9h6v1h-6zM5 10h1v1h-1zM8 8h1v4h-1zM11 8h1v6h-1zM7 12h1v2h-1zM3 12h1v2h-1zM14 12h1v2h-1zM1 12h1v2h-1zM5 12h1v2h-1zM0 14h1v1h-1zM6 14h1v1h-1zM12 14h3v1h-3zM5 15h1v1h-1z")}
.g7DDA{clip-path:path("M9 0h1v1h-1zM3 0h1v2h-1zM8 1h1v1h-1zM7 2h7v1h-7zM2 2h1v2h-1zM13 3h1v1h-1zM7 3h1v1h-1zM4 3h1v2h-1zM1 4h1v1h-1zM7 4h7v1h-7zM13 5h1v1h-1zM0 5h4v1h-4zM7 5h1v1h-1zM3 6h1v1h-1zM7 6h7v1h-7zM10 7h1v1h-1zM2 7h1v1h-1zM14 8h1v1h-1zM1 8h1v1h-1zM4 8h1v1h-1zM10 8h2v2h-2zM13 9h1v1h-1zM6 9h3v1h-3zM0 9h5v1h-5zM4 10h1v1h-1zM8 10h1v1h-1zM12 10h1v2h-1zM7 11h1v2h-1zM2 12h1v2h-1zM13 12h1v2h-1zM4 12h1v2h-1zM6 13h1v1h-1zM10 10h1v5h-1zM0 12h1v3h-1zM8 14h1v1h-1zM14 14h1v1h-1zM5 14h1v1h-1zM9 15h1v1h-1z")}
.g7E7C{clip-path:path("M9 0h1v1h-1zM3 0h1v2h-1zM13 0h1v2h-1zM8 1h1v1h-1zM12 2h1v1h-1zM14 2h1v1h-1zM8 2h3v1h-3zM2 2h1v2h-1zM12 3h3v1h-3zM9 3h1v1h-1zM4 3h1v2h-1zM13 4h1v1h-1zM8 4h1v1h-1zM1 4h1v1h-1zM10 4h1v1h-1zM8 5h3v1h-3zM0 5h4v1h-4zM12 5h3v1h-3zM6 1h1v6h-1zM3 6h1v1h-1zM10 6h1v1h-1zM14 6h1v1h-1zM6 7h9v1h-9zM2 7h1v1h-1zM1 8h1v1h-1zM9 8h1v1h-1zM4 8h1v1h-1zM13 8h1v2h-1zM0 9h5v1h-5zM8 9h1v1h-1zM12 10h1v1h-1zM14 10h1v1h-1zM8 10h3v1h-3zM4 10h1v1h-1zM9 11h1v1h-1zM12 11h3v1h-3zM13 12h1v1h-1zM8 12h1v1h-1zM10 12h1v1h-1zM2 12h1v2h-1zM4 12h1v2h-1zM12 13h3v1h-3zM8 13h3v1h-3zM6 8h1v7h-1zM0 12h1v3h-1zM10 14h1v1h-1zM14 14h1v1h-1zM6 15h9v1h-9z")}
.g7E8C{clip-path:path("M10 0h1v1h-1zM3 0h1v2h-1zM6 1h9v1h-9zM10 2h1v1h-1zM2 2h1v2h-1zM7 3h7v1h-7zM4 3h1v2h-1zM1 4h1v1h-1zM0 5h4v1h-4zM6 5h9v1h-9zM11 6h1v1h-1zM3 6h1v1h-1zM6 6h1v1h-1zM14 6h1v1h-1zM9 6h1v1h-1zM6 7h9v1h-9zM2 7h1v1h-1zM13 8h1v1h-1zM1 8h1v1h-1zM4 8h1v1h-1zM7 8h1v1h-1zM7 9h7v1h-7zM0 9h6v1h-6zM7 10h1v1h-1zM5 10h1v1h-1zM13 10h1v1h-1zM7 11h7v1h-7zM7 12h1v1h-1zM13 12h1v1h-1zM3 12h1v2h-1zM1 12h1v2h-1zM5 12h1v2h-1zM7 13h7v1h-7zM0 14h1v1h-1zM12 14h1v1h-1zM8 14h1v1h-1zM7 15h1v1h-1zM13 15h1v1h-1z")}
.g7EF4{clip-path:path("M10 0h1v1h-1zM3 0h1v2h-1zM11 1h1v1h-1zM8 0h1v3h-1zM2 2h1v2h-1zM7 3h8v1h-8zM5 3h1v2h-1zM1 4h1v1h-1zM7 4h1v1h-1zM11 4h1v2h-1zM6 5h2v1h-2zM0 5h5v1h-5zM3 6h1v1h-1zM5 6h1v1h-1zM7 6h7v1h-7zM2 7h1v1h-1zM11 7h1v2h-1zM7 7h1v2h-1zM1 8h1v1h-1zM7 9h7v1h-7zM0 9h6v1h-6zM1 10h1v1h-1zM11 10h1v3h-1zM7 10h1v3h-1zM3 12h3v1h-3zM0 13h3v1h-3zM7 13h8v1h-8zM1 14h1v1h-1zM7 14h1v2h-1z")}
.g7F51{clip-path:path("M1 1h13v1h-13zM8 5h1v1h-1zM3 5h1v1h-1zM11 4h1v3h-1zM6 4h1v3h-1zM9 6h1v1h-1zM4 6h1v1h-1zM10 7h1v2h-1zM5 7h1v2h-1zM9 9h1v2h-1zM4 9h1v2h-1zM1 2h1v10h-1zM11 9h1v3h-1zM6 9h1v3h-1zM8 11h1v1h-1zM3 11h1v1h-1zM1 12h2v1h-2zM7 12h1v1h-1zM13 2h1v13h-1zM11 14h1v1h-1zM1 13h1v3h-1zM12 15h1v1h-1z")}
.g81F3{clip-path:path("M1 1h13v1h-13zM6 2h1v1h-1zM5 3h1v1h-1zM10 4h1v1h-1zM4 4h1v1h-1zM3 5h1v1h-1zM11 5h1v1h-1zM2 6h11v1h-11zM12 7h1v1h-1zM7 8h1v2h-1zM2 10h11v1h-11zM7 11h1v3h-1zM0 14h15v1h-15z")}
.g8272{clip-path:path("M4 0h1v2h-1zM3 2h8v1h-8zM10 3h1v1h-1zM2 3h1v1h-1zM1 4h1v1h-1zM9 4h1v1h-1zM0 5h1v1h-1zM2 5h11v1h-11zM12 6h1v3h-1zM7 6h1v3h-1zM2 6h1v3h-1zM2 9h11v1h-11zM2 10h1v4h-1zM14 11h1v3h-1zM3 14h12v1h-12z")}
.g8457{clip-path:path("M10 0h1v1h-1zM4 0h1v1h-1zM0 1h15v1h-15zM10 2h1v1h-1zM4 2h1v1h-1zM6 3h1v1h-1zM12 3h1v1h-1zM11 4h1v1h-1zM2 4h8v1h-8zM10 5h1v1h-1zM6 5h1v2h-1zM9 6h1v1h-1zM0 7h15v1h-15zM6 8h2v1h-2zM4 9h2v1h-2zM2 10h10v1h-10zM11 11h1v1h-1zM0 11h2v1h-2zM4 11h1v1h-1zM4 12h8v1h-8zM11 13h1v1h-1zM4 13h1v1h-1zM4 14h8v1h-8zM11 15h1v1h-1zM4 15h1v1h-1z")}
.g85CF{clip-path:path("M9 0h1v1h-1zM5 0h1v1h-1zM0 1h15v1h-15zM12 2h1v1h-1zM9 2h1v1h-1zM5 2h1v1h-1zM10 3h1v1h-1zM13 3h1v1h-1zM3 4h12v1h-12zM3 5h1v2h-1zM1 5h1v2h-1zM5 6h4v1h-4zM7 7h1v1h-1zM5 7h1v1h-1zM1 7h3v1h-3zM13 7h1v2h-1zM3 8h1v1h-1zM5 8h4v1h-4zM0 9h4v1h-4zM8 9h1v1h-1zM5 9h1v1h-1zM10 5h1v6h-1zM12 9h1v2h-1zM5 10h4v1h-4zM1 10h1v2h-1zM3 10h1v3h-1zM11 11h1v2h-1zM7 11h1v2h-1zM5 11h1v2h-1zM0 12h1v1h-1zM14 12h1v2h-1zM12 13h1v1h-1zM5 13h4v1h-4zM10 13h1v1h-1zM2 13h1v2h-1zM13 14h2v1h-2zM9 14h1v1h-1zM14 15h1v1h-1zM1 15h1v1h-1zM8 15h1v1h-1z")}
.g888B{clip-path:path("M10 0h1v1h-1zM4 0h1v1h-1zM3 1h1v1h-1zM11 1h1v1h-1zM8 0h1v3h-1zM10 2h5v1h-5zM2 2h2v1h-2zM1 3h1v1h-1zM5 3h5v1h-5zM0 4h1v1h-1zM9 4h1v1h-1zM10 5h1v1h-1zM13 5h1v2h-1zM11 6h1v1h-1zM3 3h1v5h-1zM6 7h1v1h-1zM12 7h2v1h-2zM7 8h1v1h-1zM0 9h15v1h-15zM7 10h1v1h-1zM5 10h1v1h-1zM12 11h1v1h-1zM4 11h2v1h-2zM8 11h1v1h-1zM11 12h1v1h-1zM9 12h1v1h-1zM2 12h2v1h-2zM5 12h1v2h-1zM0 13h2v1h-2zM7 13h1v1h-1zM10 13h2v1h-2zM12 14h3v1h-3zM5 14h2v1h-2zM5 15h1v1h-1z")}
.g88FD{clip-path:path("M5 0h1v1h-1zM2 0h1v1h-1zM2 1h7v1h-7zM1 2h1v1h-1zM5 2h1v1h-1zM0 3h9v1h-9zM10 1h1v4h-1zM5 4h1v1h-1zM2 5h7v1h-7zM13 0h1v7h-1zM11 6h1v1h-1zM8 6h1v1h-1zM2 6h1v2h-1zM5 6h1v2h-1zM12 7h1v1h-1zM7 7h2v1h-2zM6 8h1v1h-1zM7 9h1v1h-1zM0 10h15v1h-15zM12 11h1v1h-1zM5 11h1v1h-1zM8 11h1v1h-1zM11 12h1v1h-1zM9 12h1v1h-1zM4 12h2v1h-2zM10 13h1v1h-1zM2 13h2v1h-2zM5 13h1v2h-1zM0 14h2v1h-2zM7 14h1v1h-1zM11 14h2v1h-2zM13 15h2v1h-2zM5 15h2v1h-2z")}
.g8907{clip-path:path("M2 0h1v1h-1zM7 0h1v2h-1zM3 1h1v1h-1zM7 2h8v1h-8zM6 3h1v1h-1zM0 3h5v1h-5zM7 4h7v1h-7zM4 4h2v1h-2zM7 5h1v1h-1zM13 5h1v1h-1zM3 5h1v2h-1zM7 6h7v1h-7zM7 7h1v1h-1zM5 7h1v1h-1zM13 7h1v1h-1zM2 7h2v1h-2zM1 8h1v1h-1zM3 8h2v1h-2zM7 8h7v1h-7zM0 9h1v1h-1zM8 9h1v1h-1zM5 9h1v2h-1zM8 10h6v1h-6zM12 11h1v1h-1zM7 11h1v1h-1zM6 12h1v1h-1zM11 12h1v1h-1zM8 12h1v1h-1zM9 13h2v1h-2zM11 14h2v1h-2zM7 14h2v1h-2zM3 9h1v7h-1zM13 15h2v1h-2zM5 15h2v1h-2z")}
.g8996{clip-path:path("M2 0h1v1h-1zM7 1h7v1h-7zM3 1h1v2h-1zM7 2h1v2h-1zM13 2h1v2h-1zM0 3h5v1h-5zM4 4h1v1h-1zM7 4h7v1h-7zM3 5h1v2h-1zM7 5h1v2h-1zM13 5h1v2h-1zM2 7h3v1h-3zM7 7h7v1h-7zM1 8h1v1h-1zM7 8h1v2h-1zM13 8h1v2h-1zM5 8h1v2h-1zM0 9h1v1h-1zM7 10h7v1h-7zM9 11h1v1h-1zM8 12h1v2h-1zM11 11h1v4h-1zM14 13h1v2h-1zM7 14h1v1h-1zM3 8h1v8h-1zM6 15h1v1h-1zM12 15h3v1h-3z")}
.g89E3{clip-path:path("M3 0h1v2h-1zM8 1h6v1h-6zM2 2h4v1h-4zM10 2h1v2h-1zM5 3h1v1h-1zM2 3h1v1h-1zM13 2h1v3h-1zM11 4h1v1h-1zM1 4h1v1h-1zM9 4h1v1h-1zM4 4h1v1h-1zM0 5h1v1h-1zM12 5h1v1h-1zM2 5h5v1h-5zM8 5h1v1h-1zM11 6h1v2h-1zM6 6h1v2h-1zM4 6h1v2h-1zM2 6h1v2h-1zM9 7h1v1h-1zM9 8h5v1h-5zM2 8h5v1h-5zM8 9h1v1h-1zM11 9h1v2h-1zM2 9h1v2h-1zM6 9h1v2h-1zM4 9h1v2h-1zM8 11h7v1h-7zM2 11h5v1h-5zM2 12h1v1h-1zM4 12h1v2h-1zM6 12h1v3h-1zM1 13h1v2h-1zM11 12h1v4h-1zM0 15h1v1h-1zM5 15h2v1h-2z")}
.g8A0A{clip-path:path("M2 0h1v1h-1zM3 1h1v1h-1zM6 1h6v1h-6zM0 3h6v1h-6zM1 5h4v1h-4zM11 2h1v5h-1zM8 2h1v5h-1zM6 7h6v1h-6zM1 7h4v1h-4zM1 9h4v1h-4zM11 8h1v4h-1zM1 10h1v3h-1zM4 10h1v3h-1zM14 11h1v3h-1zM12 12h1v2h-1zM1 13h4v1h-4zM13 14h2v1h-2zM1 14h1v1h-1zM4 14h1v1h-1zM8 8h1v8h-1zM14 15h1v1h-1z")}
.g8A3B{clip-path:path("M9 0h1v1h-1zM2 0h1v1h-1zM3 1h1v1h-1zM10 1h1v1h-1zM7 3h8v1h-8zM0 3h6v1h-6zM1 5h4v1h-4zM10 4h1v4h-1zM1 7h4v1h-4zM7 8h7v1h-7zM1 9h4v1h-4zM1 10h1v3h-1zM4 10h1v3h-1zM10 9h1v5h-1zM1 13h4v1h-4zM1 14h1v1h-1zM4 14h1v1h-1zM6 14h9v1h-9z")}
.g8B49{clip-path:path("M2 0h1v1h-1zM3 1h1v1h-1zM5 1h4v1h-4zM13 1h1v1h-1zM10 0h1v3h-1zM12 2h1v1h-1zM8 2h1v2h-1zM14 3h1v1h-1zM6 3h1v1h-1zM0 3h5v1h-5zM11 3h1v2h-1zM7 4h1v1h-1zM13 4h1v1h-1zM6 5h1v1h-1zM12 5h1v1h-1zM1 5h4v1h-4zM7 6h5v1h-5zM5 6h1v1h-1zM13 6h1v1h-1zM14 7h1v1h-1zM1 7h4v1h-4zM6 8h7v1h-7zM1 9h4v1h-4zM6 9h1v2h-1zM12 9h1v2h-1zM6 11h7v1h-7zM1 10h1v3h-1zM4 10h1v3h-1zM6 12h1v1h-1zM12 12h1v1h-1zM11 13h1v1h-1zM7 13h1v1h-1zM1 13h4v1h-4zM4 14h11v1h-11zM1 14h1v1h-1z")}
.g8DEF{clip-path:path("M9 0h1v2h-1zM1 1h5v1h-5zM9 2h4v1h-4zM12 3h1v1h-1zM8 3h1v1h-1zM1 2h1v3h-1zM5 2h1v3h-1zM11 4h1v1h-1zM7 4h1v1h-1zM9 4h1v1h-1zM10 5h1v1h-1zM1 5h5v1h-5zM9 6h1v1h-1zM11 6h1v1h-1zM12 7h1v1h-1zM8 7h1v1h-1zM3 6h1v3h-1zM13 8h2v1h-2zM7 8h1v1h-1zM3 9h3v1h-3zM8 9h5v1h-5zM3 10h1v3h-1zM1 9h1v5h-1zM12 10h1v4h-1zM8 10h1v4h-1zM3 13h3v1h-3zM0 14h3v1h-3zM8 14h5v1h-5zM12 15h1v1h-1zM8 15h1v1h-1z")}
.g8DF3{clip-path:path("M1 1h5v1h-5zM9 0h1v4h-1zM7 3h1v1h-1zM14 3h1v1h-1zM11 0h1v5h-1zM1 2h1v3h-1zM5 2h1v3h-1zM13 4h1v1h-1zM8 4h2v1h-2zM11 5h2v1h-2zM1 5h5v1h-5zM11 6h1v1h-1zM9 5h1v3h-1zM11 7h2v1h-2zM3 6h1v3h-1zM8 8h2v1h-2zM13 8h1v1h-1zM7 9h1v1h-1zM14 9h1v1h-1zM3 9h3v1h-3zM9 9h1v3h-1zM3 10h1v3h-1zM1 9h1v5h-1zM8 12h1v2h-1zM3 13h3v1h-3zM11 8h1v7h-1zM14 12h1v3h-1zM0 14h3v1h-3zM7 14h1v1h-1zM6 15h1v1h-1zM12 15h3v1h-3z")}
.g8EF8{clip-path:path("M3 0h1v3h-1zM10 0h1v4h-1zM0 3h7v1h-7zM3 4h1v1h-1zM7 4h7v1h-7zM1 5h5v1h-5zM3 6h1v1h-1zM1 6h1v1h-1zM5 6h1v1h-1zM1 7h5v1h-5zM10 5h1v4h-1zM7 5h1v4h-1zM13 5h1v4h-1zM3 8h1v1h-1zM1 8h1v1h-1zM5 8h1v1h-1zM7 9h7v1h-7zM1 9h5v1h-5zM3 10h1v1h-1zM7 10h1v1h-1zM0 11h8v1h-8zM10 10h1v4h-1zM13 10h1v4h-1zM7 12h1v2h-1zM7 14h7v1h-7zM3 12h1v4h-1zM7 15h1v1h-1zM13 15h1v1h-1z")}
.g8F49{clip-path:path("M10 0h1v1h-1zM6 1h9v1h-9zM3 0h1v3h-1zM10 2h1v1h-1zM7 3h7v1h-7zM0 3h6v1h-6zM3 4h1v1h-1zM10 4h1v1h-1zM7 4h1v1h-1zM13 4h1v1h-1zM7 5h7v1h-7zM1 5h5v1h-5zM7 6h1v1h-1zM13 6h1v1h-1zM3 6h1v1h-1zM1 6h1v1h-1zM10 6h1v1h-1zM5 6h1v1h-1zM7 7h7v1h-7zM1 7h5v1h-5zM3 8h1v1h-1zM14 8h1v1h-1zM1 8h1v1h-1zM10 8h1v1h-1zM5 8h1v1h-1zM7 9h8v1h-8zM1 9h5v1h-5zM3 10h1v1h-1zM12 10h1v1h-1zM7 11h8v1h-8zM0 11h6v1h-6zM7 12h1v1h-1zM8 13h1v1h-1zM12 12h1v3h-1zM10 14h1v1h-1zM3 12h1v4h-1zM11 15h1v1h-1z")}
.g901F{clip-path:path("M9 0h1v2h-1zM2 1h1v1h-1zM5 2h9v1h-9zM3 2h1v2h-1zM9 3h1v1h-1zM6 4h7v1h-7zM12 5h1v2h-1zM6 5h1v2h-1zM9 5h1v2h-1zM0 6h4v1h-4zM6 7h7v1h-7zM8 8h3v1h-3zM7 9h1v1h-1zM11 9h1v1h-1zM6 10h1v1h-1zM12 10h1v1h-1zM5 11h1v1h-1zM13 11h1v1h-1zM3 7h1v6h-1zM9 9h1v4h-1zM4 13h1v1h-1zM2 13h1v1h-1zM1 14h1v1h-1zM5 14h10v1h-10z")}
.g9032{clip-path:path("M9 0h1v1h-1zM7 0h1v2h-1zM10 1h1v1h-1zM2 1h1v1h-1zM6 2h9v1h-9zM3 2h1v2h-1zM6 3h1v1h-1zM10 3h1v2h-1zM5 4h2v1h-2zM6 5h8v1h-8zM4 5h1v1h-1zM0 6h4v1h-4zM10 6h1v2h-1zM6 6h1v2h-1zM6 8h8v1h-8zM6 9h1v2h-1zM10 9h1v2h-1zM6 11h9v1h-9zM3 7h1v6h-1zM6 12h1v1h-1zM4 13h1v1h-1zM2 13h1v1h-1zM1 14h1v1h-1zM5 14h10v1h-10z")}
.g9072{clip-path:path("M5 0h9v1h-9zM1 1h1v1h-1zM5 1h1v1h-1zM13 1h1v1h-1zM5 2h9v1h-9zM2 2h1v2h-1zM10 3h1v2h-1zM12 4h1v1h-1zM8 4h1v1h-1zM9 5h3v1h-3zM12 6h1v1h-1zM8 6h1v1h-1zM0 6h3v1h-3zM10 6h1v1h-1zM7 7h1v1h-1zM13 7h1v1h-1zM10 8h1v1h-1zM8 8h1v1h-1zM8 9h6v1h-6zM7 10h1v1h-1zM5 3h1v9h-1zM10 10h1v2h-1zM6 12h9v1h-9zM2 7h1v7h-1zM4 12h1v2h-1zM10 13h1v2h-1zM3 14h1v1h-1zM1 14h1v1h-1zM0 15h1v1h-1zM4 15h11v1h-11z")}
.g9078{clip-path:path("M4 0h4v1h-4zM10 0h4v1h-4zM7 1h1v1h-1zM13 1h1v1h-1zM1 1h1v1h-1zM10 1h1v1h-1zM4 1h1v1h-1zM4 2h4v1h-4zM10 2h4v1h-4zM2 2h1v2h-1zM8 3h1v1h-1zM14 3h1v1h-1zM10 3h1v1h-1zM4 3h1v1h-1zM5 4h4v1h-4zM11 4h4v1h-4zM11 5h1v1h-1zM7 5h1v1h-1zM5 6h9v1h-9zM0 6h3v1h-3zM11 7h1v2h-1zM7 7h1v2h-1zM4 9h11v1h-11zM11 10h1v1h-1zM7 10h1v1h-1zM6 11h1v1h-1zM12 11h1v1h-1zM2 7h1v6h-1zM5 12h1v1h-1zM13 12h1v1h-1zM3 13h1v1h-1zM1 13h1v1h-1zM0 14h1v1h-1zM4 14h11v1h-11z")}
.g90E8{clip-path:path("M3 0h1v1h-1zM10 1h5v1h-5zM4 1h1v1h-1zM14 2h1v1h-1zM1 2h8v1h-8zM13 3h1v2h-1zM7 4h1v1h-1zM2 4h1v1h-1zM10 2h1v4h-1zM3 5h1v1h-1zM6 5h1v1h-1zM12 5h1v1h-1zM0 6h11v1h-11zM13 6h1v2h-1zM2 9h6v1h-6zM10 7h1v4h-1zM14 8h1v3h-1zM13 11h1v1h-1zM10 11h2v1h-2zM7 10h1v3h-1zM2 10h1v3h-1zM12 12h1v1h-1zM2 13h6v1h-6zM7 14h1v1h-1zM2 14h1v1h-1zM10 12h1v4h-1z")}
.g91CF{clip-path:path("M3 1h9v1h-9zM3 2h1v1h-1zM11 2h1v1h-1zM3 3h9v1h-9zM3 4h1v1h-1zM11 4h1v1h-1zM0 5h15v1h-15zM3 7h9v1h-9zM3 8h1v1h-1zM7 8h1v1h-1zM11 8h1v1h-1zM3 9h9v1h-9zM3 10h1v1h-1zM7 10h1v1h-1zM11 10h1v1h-1zM3 11h9v1h-9zM7 12h1v1h-1zM3 13h9v1h-9zM7 14h1v1h-1zM1 15h13v1h-13z")}
.g9291{clip-path:path("M3 0h1v2h-1zM10 0h1v3h-1zM7 1h1v2h-1zM4 2h1v1h-1zM2 2h1v2h-1zM5 3h1v1h-1zM7 3h7v1h-7zM1 4h1v1h-1zM7 4h1v1h-1zM0 5h1v1h-1zM6 5h1v1h-1zM2 5h3v1h-3zM10 4h1v3h-1zM3 6h1v2h-1zM6 7h9v1h-9zM0 8h6v1h-6zM3 9h1v2h-1zM0 10h1v1h-1zM5 10h1v1h-1zM8 8h1v4h-1zM3 11h2v1h-2zM1 11h1v2h-1zM3 12h1v1h-1zM7 12h1v2h-1zM3 13h3v1h-3zM11 8h1v7h-1zM14 12h1v3h-1zM6 14h1v1h-1zM0 14h3v1h-3zM1 15h1v1h-1zM5 15h1v1h-1zM12 15h3v1h-3z")}
.g9396{clip-path:path("M3 0h1v2h-1zM7 1h1v1h-1zM13 1h1v1h-1zM12 2h1v1h-1zM8 2h1v1h-1zM4 2h1v1h-1zM10 0h1v4h-1zM2 2h1v2h-1zM5 3h1v1h-1zM1 4h1v1h-1zM7 4h7v1h-7zM0 5h1v1h-1zM2 5h3v1h-3zM13 5h1v2h-1zM7 5h1v2h-1zM3 6h1v2h-1zM7 7h7v1h-7zM7 8h1v1h-1zM13 8h1v1h-1zM0 8h6v1h-6zM7 9h7v1h-7zM3 9h1v2h-1zM0 10h1v1h-1zM5 10h1v1h-1zM7 10h1v2h-1zM13 10h1v2h-1zM3 11h2v1h-2zM1 11h1v2h-1zM3 12h1v1h-1zM7 12h7v1h-7zM3 13h3v1h-3zM12 14h1v1h-1zM0 14h3v1h-3zM8 14h1v1h-1zM1 15h1v1h-1zM7 15h1v1h-1zM13 15h1v1h-1z")}
.g9589{clip-path:path("M9 1h5v1h-5zM1 1h5v1h-5zM1 2h1v1h-1zM9 2h1v1h-1zM5 2h1v1h-1zM13 2h1v1h-1zM9 3h5v1h-5zM1 3h5v1h-5zM1 4h1v1h-1zM9 4h1v1h-1zM5 4h1v1h-1zM13 4h1v1h-1zM9 5h5v1h-5zM1 5h5v1h-5zM8 6h1v2h-1zM4 8h8v1h-8zM7 9h2v1h-2zM6 10h1v1h-1zM5 11h1v1h-1zM4 12h1v1h-1zM8 10h1v4h-1zM6 13h1v1h-1zM13 6h1v9h-1zM11 14h1v1h-1zM7 14h1v1h-1zM1 6h1v10h-1zM12 15h1v1h-1z")}
.g958B{clip-path:path("M8 1h5v1h-5zM1 1h5v1h-5zM1 2h1v1h-1zM12 2h1v1h-1zM5 2h1v1h-1zM8 2h1v1h-1zM8 3h5v1h-5zM1 3h5v1h-5zM1 4h1v1h-1zM12 4h1v1h-1zM5 4h1v1h-1zM8 4h1v1h-1zM8 5h5v1h-5zM1 5h5v1h-5zM4 7h6v1h-6zM5 8h1v2h-1zM8 8h1v2h-1zM3 10h8v1h-8zM5 11h1v2h-1zM4 13h1v1h-1zM12 6h1v9h-1zM8 11h1v4h-1zM3 14h1v1h-1zM10 14h1v1h-1zM1 6h1v10h-1zM11 15h1v1h-1z")}
.g9593{clip-path:path("M8 1h5v1h-5zM1 1h5v1h-5zM1 2h1v1h-1zM12 2h1v1h-1zM5 2h1v1h-1zM8 2h1v1h-1zM8 3h5v1h-5zM1 3h5v1h-5zM1 4h1v1h-1zM12 4h1v1h-1zM5 4h1v1h-1zM8 4h1v1h-1zM8 5h5v1h-5zM1 5h5v1h-5zM4 7h6v1h-6zM9 8h1v1h-1zM4 8h1v1h-1zM4 9h6v1h-6zM9 10h1v1h-1zM4 10h1v1h-1zM4 11h6v1h-6zM9 12h1v1h-1zM4 12h1v1h-1zM12 6h1v9h-1zM10 14h1v1h-1zM1 6h1v10h-1zM11 15h1v1h-1z")}
.g95DC{clip-path:path("M9 0h5v1h-5zM1 0h5v1h-5zM1 1h1v1h-1zM9 1h1v1h-1zM5 1h1v1h-1zM13 1h1v1h-1zM9 2h5v1h-5zM1 2h5v1h-5zM1 3h1v1h-1zM9 3h1v1h-1zM5 3h1v1h-1zM13 3h1v1h-1zM9 4h5v1h-5zM1 4h5v1h-5zM9 5h1v1h-1zM4 5h1v1h-1zM11 6h1v1h-1zM8 6h1v1h-1zM3 6h1v1h-1zM6 6h1v1h-1zM3 7h3v1h-3zM8 7h3v1h-3zM11 8h1v1h-1zM6 8h1v1h-1zM9 8h1v1h-1zM4 8h1v1h-1zM8 9h4v1h-4zM3 9h4v1h-4zM6 10h1v2h-1zM8 10h1v2h-1zM11 11h1v1h-1zM3 11h1v1h-1zM8 12h4v1h-4zM3 12h4v1h-4zM6 13h1v1h-1zM13 5h1v10h-1zM11 14h1v1h-1zM5 14h1v1h-1zM1 5h1v11h-1zM8 13h1v3h-1zM12 15h1v1h-1zM4 15h1v1h-1z")}
.g9664{clip-path:path("M1 1h4v1h-4zM9 1h1v2h-1zM4 2h1v1h-1zM10 3h1v1h-1zM8 3h1v1h-1zM1 2h1v3h-1zM3 3h1v2h-1zM7 4h1v1h-1zM11 4h1v1h-1zM12 5h1v1h-1zM6 5h1v1h-1zM1 5h2v1h-2zM3 6h1v1h-1zM5 6h1v1h-1zM13 6h2v1h-2zM7 6h5v1h-5zM9 7h1v2h-1zM1 6h1v4h-1zM6 9h8v1h-8zM4 7h1v4h-1zM1 10h2v1h-2zM11 11h1v1h-1zM7 11h1v1h-1zM3 11h1v1h-1zM12 12h1v1h-1zM6 12h1v1h-1zM5 13h1v1h-1zM9 10h1v5h-1zM13 13h1v2h-1zM7 14h1v1h-1zM1 11h1v5h-1zM8 15h1v1h-1z")}
.g96B1{clip-path:path("M10 0h5v1h-5zM1 1h9v1h-9zM13 2h1v1h-1zM6 2h1v1h-1zM9 2h1v1h-1zM4 2h1v2h-1zM12 3h1v1h-1zM7 3h1v1h-1zM10 3h1v1h-1zM6 4h7v1h-7zM1 2h1v4h-1zM3 4h1v2h-1zM9 5h1v1h-1zM5 6h9v1h-9zM1 6h2v1h-2zM3 7h1v1h-1zM6 8h7v1h-7zM12 9h1v1h-1zM1 7h1v4h-1zM6 10h7v1h-7zM4 8h1v4h-1zM12 11h1v1h-1zM1 11h2v1h-2zM3 12h1v1h-1zM6 12h7v1h-7zM13 13h1v1h-1zM9 13h1v1h-1zM7 13h1v2h-1zM5 13h1v2h-1zM12 14h1v1h-1zM10 14h1v1h-1zM1 12h1v4h-1zM14 14h1v2h-1zM4 15h1v1h-1zM8 15h5v1h-5z")}
.g96E2{clip-path:path("M3 0h1v1h-1zM12 0h1v1h-1zM10 0h1v2h-1zM4 1h1v1h-1zM13 1h1v1h-1zM1 2h7v1h-7zM9 2h1v1h-1zM3 3h1v1h-1zM9 3h6v1h-6zM5 3h1v1h-1zM4 4h1v1h-1zM7 4h3v1h-3zM12 4h1v2h-1zM3 5h1v1h-1zM5 5h1v1h-1zM9 5h1v1h-1zM1 4h1v3h-1zM7 5h1v2h-1zM9 6h6v1h-6zM1 7h7v1h-7zM12 7h1v2h-1zM9 7h1v2h-1zM4 8h1v1h-1zM1 9h7v1h-7zM9 9h6v1h-6zM3 10h1v2h-1zM5 11h1v1h-1zM12 10h1v3h-1zM9 10h1v3h-1zM3 12h3v1h-3zM9 13h6v1h-6zM7 10h1v5h-1zM5 14h1v1h-1zM1 10h1v6h-1zM9 14h1v2h-1zM6 15h1v1h-1z")}
.g9805{clip-path:path("M7 1h8v1h-8zM10 2h1v1h-1zM9 3h1v1h-1zM0 3h6v1h-6zM7 4h7v1h-7zM7 5h1v2h-1zM13 5h1v2h-1zM7 7h7v1h-7zM7 8h1v1h-1zM13 8h1v1h-1zM7 9h7v1h-7zM3 4h1v7h-1zM7 10h1v2h-1zM13 10h1v2h-1zM3 11h3v1h-3zM0 12h3v1h-3zM7 12h7v1h-7zM1 13h1v1h-1zM12 13h1v1h-1zM8 13h1v1h-1zM7 14h1v1h-1zM13 14h1v1h-1zM14 15h1v1h-1zM6 15h1v1h-1z")}
.g986F{clip-path:path("M8 1h7v1h-7zM0 1h7v1h-7zM0 2h1v1h-1zM6 2h1v1h-1zM11 2h1v1h-1zM0 3h7v1h-7zM10 3h1v1h-1zM0 4h1v1h-1zM6 4h1v1h-1zM8 4h6v1h-6zM0 5h7v1h-7zM13 5h1v2h-1zM8 5h1v2h-1zM1 6h1v1h-1zM5 6h1v1h-1zM0 7h1v1h-1zM2 7h1v1h-1zM6 7h1v1h-1zM8 7h6v1h-6zM4 7h1v1h-1zM8 8h1v1h-1zM0 8h3v1h-3zM13 8h1v1h-1zM4 8h3v1h-3zM1 9h1v1h-1zM5 9h1v1h-1zM8 9h6v1h-6zM0 10h1v1h-1zM2 10h1v1h-1zM6 10h1v1h-1zM4 10h1v1h-1zM13 10h1v2h-1zM8 10h1v2h-1zM0 11h3v1h-3zM4 11h3v1h-3zM8 12h6v1h-6zM12 13h1v1h-1zM9 13h1v1h-1zM0 13h1v2h-1zM2 13h1v2h-1zM6 13h1v2h-1zM4 13h1v2h-1zM13 14h1v1h-1zM8 14h1v1h-1zM14 15h1v1h-1zM7 15h1v1h-1z")}
.g9A57{clip-path:path("M10 0h1v2h-1zM1 1h5v1h-5zM3 2h1v1h-1zM1 2h1v1h-1zM9 2h1v1h-1zM11 2h1v1h-1zM8 3h1v1h-1zM12 3h1v1h-1zM1 3h5v1h-5zM3 4h1v1h-1zM1 4h1v1h-1zM7 4h1v1h-1zM13 4h1v1h-1zM14 5h1v1h-1zM1 5h6v1h-6zM8 5h5v1h-5zM3 6h1v2h-1zM1 6h1v2h-1zM11 8h3v1h-3zM7 8h3v1h-3zM1 8h5v1h-5zM11 9h1v2h-1zM7 9h1v2h-1zM13 9h1v2h-1zM9 9h1v2h-1zM11 11h3v1h-3zM7 11h3v1h-3zM3 10h1v3h-1zM1 10h1v3h-1zM12 12h1v2h-1zM8 12h1v2h-1zM0 13h1v1h-1zM5 9h1v6h-1zM11 14h1v1h-1zM7 14h1v1h-1zM13 14h1v1h-1zM3 14h1v1h-1zM9 14h1v1h-1zM10 15h1v1h-1zM6 15h1v1h-1zM4 15h1v1h-1zM14 15h1v1h-1z")}
.g9EDE{clip-path:path("M0 1h7v1h-7zM0 2h1v1h-1zM6 2h1v1h-1zM11 0h1v4h-1zM3 2h1v2h-1zM0 3h2v1h-2zM5 3h2v1h-2zM2 4h3v1h-3zM11 4h4v1h-4zM0 4h1v2h-1zM6 4h1v2h-1zM3 5h1v1h-1zM0 6h7v1h-7zM11 5h1v3h-1zM3 7h1v1h-1zM8 8h7v1h-7zM0 8h7v1h-7zM3 9h1v1h-1zM3 10h4v1h-4zM0 11h3v1h-3zM14 9h1v5h-1zM8 9h1v5h-1zM6 12h1v2h-1zM2 13h1v2h-1zM4 13h1v2h-1zM8 14h7v1h-7zM0 13h1v3h-1zM14 15h1v1h-1zM8 15h1v1h-1z")}

.p{background:#de8086;border-color:#f09498 #b04048 #b04048 #f09498;}
.u{background:#ae4ab0;border-color:#d890d8 #682c64 #682c64 #d890d8;color:#c8b8f0;}
.l{background:#2e7aa8;border-color:#58a8dc #18486e #18486e #58a8dc;}
.t{background:#2e6462;border-color:#58a8a8 #50706c #50706c #58a8a8;}
.y{color:#f0f040;border-color:#50706c #58a8a8 #58a8a8 #50706c;}
#title{left:3px;top:3px;width:1274px;height:23px;background:linear-gradient(90deg,#0a246a 0%,#a6caf0 100%);}
#title span{position:absolute;left:24px;top:1px;font:bold 16px/21px "Liberation Serif",serif;color:#fff;white-space:pre;letter-spacing:-0.35px;word-spacing:2.5px;}
.wb{position:absolute;top:2px;width:21px;height:19px;box-sizing:border-box;background:#d4d0c8;border:1px solid;border-color:#fff #404040 #404040 #fff;box-shadow:inset -1px -1px 0 #808080;}
</style>
</head>
<body>

<div class="abs" style="left:0;top:0;width:1280px;height:3px;background:#d4d0c8"></div>
<div class="abs" style="left:0;top:0;width:3px;height:1024px;background:#d4d0c8"></div>
<div class="abs" style="left:1px;top:1px;width:1277px;height:1px;background:#fff"></div>
<div class="abs" style="left:2px;top:2px;width:1275px;height:1px;background:#ece9e2"></div>
<div class="abs" style="left:2px;top:2px;width:1px;height:1019px;background:#ece9e2"></div>
<div class="abs" style="left:1px;top:1px;width:1px;height:1021px;background:#fff"></div>
<div class="abs" style="left:1277px;top:0;width:1px;height:1024px;background:#d4d0c8"></div>
<div class="abs" style="left:1278px;top:1px;width:1px;height:1022px;background:#808080"></div>
<div class="abs" style="left:1279px;top:0;width:1px;height:1024px;background:#404040"></div>
<div class="abs" style="left:0;top:1021px;width:1278px;height:1px;background:#d4d0c8"></div>
<div class="abs" style="left:1px;top:1022px;width:1278px;height:1px;background:#808080"></div>
<div class="abs" style="left:0;top:1023px;width:1280px;height:1px;background:#404040"></div>
<div class="abs" style="left:3px;top:26px;width:1274px;height:1px;background:#d4d0c8"></div>
<div id="title" class="abs">
<svg class="abs" style="left:2px;top:1px" width="21" height="20" viewBox="0 0 21 20"><defs><linearGradient id="ig" x1="0" x2="1" y1="0" y2="0"><stop offset="0" stop-color="#0000ff" stop-opacity="0"/><stop offset="0.25" stop-color="#0000ff"/><stop offset="0.7" stop-color="#0000ff"/><stop offset="1" stop-color="#0000ff" stop-opacity="0"/></linearGradient></defs><rect x="8" y="0" width="13" height="20" fill="url(#ig)"/><path d="M1.5 9.5 L7.5 3.5 L10 6.5 L9.5 17.5 L7.5 18 L1.5 11.5 Z" fill="#fff"/><path d="M2 11 L8 5 M2.5 13 L8.5 8 M4 15 L9 11" stroke="#c0c0f0" stroke-width="0.8" fill="none"/><circle cx="9" cy="3.8" r="2.3" fill="#f4f4ff"/><path d="M7.5 5.2 L10.5 5.2" stroke="#202060" stroke-width="0.8"/><path d="M8.75 9 L13 6.3 L16.5 8.5 L12 12 L9 11.5 Z" fill="#e8e030"/><path d="M8.75 13 L12 11.8 L16.9 13.5 L11 17.8 L8.5 17.5 Z" fill="#b82010"/><path d="M7.5 17.5 L9 13 L9 17.8 Z" fill="#f0a0a0"/><circle cx="17.8" cy="16.6" r="2.3" fill="#000020"/><circle cx="17.4" cy="16.1" r="1.7" fill="#f0e878"/></svg>
<span>CIMATRON IT-12 version 12.00</span>
<div class="wb" style="left:1207px"><div class="abs" style="left:4px;top:13px;width:8px;height:2px;background:#000"></div></div>
<div class="wb" style="left:1228px"><div class="abs" style="left:3px;top:3px;width:11px;height:11px;box-sizing:border-box;border:1px solid #808080;border-top:2px solid #808080;box-shadow:inset -1px -1px 0 #fff"></div></div>
<div class="wb" style="left:1251px"><svg class="abs" style="left:4px;top:4px" width="10" height="9" viewBox="0 0 10 9"><path d="M1 0.5 L9 8.5 M9 0.5 L1 8.5" stroke="#000" stroke-width="2"/></svg></div>
</div>
<div class="b p" style="left:4px;top:28px;width:210px;height:24px;padding:3px 0 0 1px"><i class="g g6309">按</i> <i class="g h g3C">&lt;</i><i class="g h g43">C</i><i class="g h g52">R</i><i class="g h g3E">&gt;</i> <i class="g g7E7C">繼</i><i class="g g7E8C">續</i></div>
<div class="b u" style="left:4px;top:52px;width:160px;height:23px"><i class="g g79FB">移</i><i class="g g52D5">動</i><i class="g g5200">刀</i><i class="g g5177">具</i></div>
<div class="b p" style="left:164px;top:52px;width:160px;height:23px"><i class="g g522A">刪</i><i class="g g9664">除</i></div>
<div class="b p" style="left:324px;top:52px;width:160px;height:23px"><i class="g g522A">刪</i><i class="g g9664">除</i><i class="g g81F3">至</i><i class="g g7D42">終</i><i class="g g9EDE">點</i></div>
<div class="b p" style="left:484px;top:52px;width:160px;height:23px"><i class="g g4FEE">修</i><i class="g g6539">改</i></div>
<div class="b p" style="left:644px;top:52px;width:160px;height:23px"><i class="g g670D">服</i><i class="g g52D9">務</i></div>
<div class="b p" style="left:804px;top:52px;width:160px;height:23px"><i class="g g6A5F">機</i><i class="g g68B0">械</i><i class="g g53C3">參</i><i class="g g6578">數</i></div>
<div class="b p" style="left:4px;top:75px;width:160px;height:23px"><i class="g g8DF3">跳</i><i class="g g81F3">至</i><i class="g g67D0">某</i><i class="g g55AE">單</i><i class="g g7BC0">節</i><i class="g h g3E">&gt;</i></div>
<div class="b u" style="left:164px;top:75px;width:160px;height:23px"><i class="g g5F80">往</i><i class="g g524D">前</i></div>
<div class="b p" style="left:324px;top:75px;width:160px;height:23px"><i class="g g5F80">往</i><i class="g g5F8C">後</i></div>
<div class="b p" style="left:484px;top:75px;width:160px;height:23px"></div>
<div class="b p" style="left:644px;top:75px;width:160px;height:23px"></div>
<div class="b u" style="left:804px;top:75px;width:160px;height:23px"><i class="g g5200">刀</i><i class="g g5177">具</i><i class="g h g3A">:</i><i class="g g986F">顯</i><i class="g g793A">示</i><i class="g h g3E">&gt;</i></div>
<div class="b p" style="left:4px;top:98px;width:160px;height:23px"><i class="g h g4C">L</i><i class="g h g3A">:</i><i class="g h g42">B</i><i class="g h g4C">L</i><i class="g h g4B">K</i><i class="g h g3D">=</i><i class="g h g31">1</i><i class="g h g34">4</i></div>
<div class="b p" style="left:164px;top:98px;width:160px;height:23px"><i class="g g5EF6">延</i><i class="g g9072">遲</i><i class="g g6642">時</i><i class="g g9593">間</i><i class="g h g3D">=</i><i class="g h g30">0</i><i class="g h g2E">.</i><i class="g h g30">0</i><i class="g h g30">0</i><i class="g h g31">1</i></div>
<div class="b u" style="left:324px;top:98px;width:160px;height:23px"><i class="g g6578">數</i><i class="g g91CF">量</i><i class="g h g3D">=</i><i class="g h g31">1</i></div>
<div class="b u" style="left:484px;top:98px;width:160px;height:23px"><i class="g g55AE">單</i><i class="g g7BC0">節</i><i class="g g6B65">步</i><i class="g g4F10">伐</i></div>
<div class="b u" style="left:644px;top:98px;width:160px;height:23px"><i class="g g986F">顯</i><i class="g g793A">示</i><i class="g g5168">全</i><i class="g g90E8">部</i><i class="g h g3E">&gt;</i></div>
<div class="b p" style="left:804px;top:98px;width:160px;height:23px"><i class="g g96B1">隱</i><i class="g g85CF">藏</i><i class="g g9078">選</i><i class="g g9805">項</i><i class="g h g3E">&gt;</i></div>
<div class="b p" style="left:4px;top:121px;width:160px;height:23px"></div>
<div class="b p" style="left:164px;top:121px;width:160px;height:23px"></div>
<div class="b p" style="left:324px;top:121px;width:160px;height:23px"></div>
<div class="b p" style="left:484px;top:121px;width:160px;height:23px"></div>
<div class="b p" style="left:644px;top:121px;width:160px;height:23px"></div>
<div class="b l" style="left:804px;top:121px;width:160px;height:23px"><i class="g g96E2">離</i><i class="g g958B">開</i></div>
<div class="b p" style="left:4px;top:144px;width:320px;height:23px"><i class="g h g2D">-</i><i class="g h g2D">-</i><i class="g h g2D">-</i><i class="g h g2D">-</i><i class="g h g2D">-</i>      <i class="g g53E3">口</i><i class="g g888B">袋</i><i class="g g6295">投</i><i class="g g5F71">影</i><i class="g h g3D">=</i><i class="g h g32">2</i></div>
<div class="b p" style="left:324px;top:144px;width:320px;height:23px"><i class="g h g2D">-</i><i class="g h g2D">-</i> <i class="g g5200">刀</i><i class="g g5177">具</i> <i class="g h g3D">=</i> <i class="g h g31">1</i><i class="g h g30">0</i><i class="g h g42">B</i></div>
<div class="b p" style="left:644px;top:144px;width:240px;height:23px"><i class="g g7121">無</i><i class="g g8A3B">註</i><i class="g g89E3">解</i></div>
<div class="b p" style="left:884px;top:144px;width:80px;height:23px"><i class="g h g4D">M</i><i class="g h g4F">O</i><i class="g h g44">D</i><i class="g h g45">E</i><i class="g h g4C">L</i></div>
<svg class="abs" style="left:0;top:0" width="1280" height="1024" viewBox="0 0 1280 1024">
<g fill="#fff"><rect x="4" y="167" width="1176" height="1"/><rect x="4" y="167" width="1" height="804"/><rect x="1179" y="167" width="1" height="804"/><rect x="4" y="972" width="1176" height="1"/></g>
<g fill="none" stroke="#fff" stroke-width="1" shape-rendering="crispEdges">
<path d="M14.5 564.5 L746.5 352.5 L1168.5 718.5 L437 930.5 Z"/>
<path d="M380.5 458.5 L465.0 532.3 L472.5 611.8 L489.7 625.9"/>
<path d="M957.5 535.5 L811.0 578.4 L798.0 655.1 L768.5 662.9"/>
<path d="M225.8 747.5 L371.9 705.6 L384.9 774.8 L414.4 765.5"/>
<path d="M802.8 824.5 L718.1 751.7 L710.6 818.2 L693.4 802.5"/>
</g>
<g fill="none" stroke="#2cdc2c" stroke-width="1" shape-rendering="crispEdges">
<ellipse cx="591.5" cy="673.0" rx="213.0" ry="106.5"/>
<ellipse cx="591.5" cy="677.1" rx="212.2" ry="106.0"/>
<ellipse cx="591.5" cy="681.2" rx="211.4" ry="105.5"/>
<ellipse cx="591.5" cy="685.4" rx="210.6" ry="105.1"/>
<ellipse cx="591.5" cy="689.5" rx="209.8" ry="104.6"/>
<ellipse cx="591.5" cy="693.6" rx="209.0" ry="104.1"/>
<ellipse cx="591.5" cy="697.7" rx="208.2" ry="103.6"/>
<ellipse cx="591.5" cy="701.8" rx="207.4" ry="103.1"/>
<ellipse cx="591.5" cy="706.0" rx="206.6" ry="102.7"/>
<ellipse cx="591.5" cy="710.1" rx="205.8" ry="102.2"/>
</g>
<path d="M758.5 606 L752 652" fill="none" stroke="#2ee02e" stroke-width="1"/>
<ellipse cx="591.5" cy="714.2" rx="205" ry="101.7" fill="#00ff00"/>
<path d="M405 693h1M405 727h1M405 734h1M409 682h1M413 683h1M414 686h1M415 747h1M415 748h1M416 702h1M416 753h1M419 698h1M421 672h1M421 750h1M423 676h1M423 725h1M423 731h1M423 753h1M424 696h1M424 702h1M425 744h1M425 760h1M426 674h1M426 739h1M426 752h1M428 671h1M428 677h1M428 727h1M428 754h1M428 764h1M429 738h1M429 761h1M430 661h1M433 743h1M434 662h1M434 674h1M434 749h1M435 663h1M435 664h1M435 673h1M435 674h1M435 679h1M435 682h1M436 755h1M438 667h1M438 753h1M438 754h1M438 771h1M439 667h1M439 738h1M439 755h1M440 675h1M440 700h1M440 743h1M440 750h1M440 771h1M441 668h1M441 673h1M441 676h1M441 752h1M442 653h1M442 685h1M442 756h1M442 771h1M443 662h1M444 653h1M445 654h1M445 657h1M445 683h1M446 730h1M446 761h1M447 650h1M447 651h1M448 659h1M448 661h1M448 733h1M448 761h1M449 696h1M449 778h1M450 650h1M450 674h1M450 677h1M450 690h1M450 740h1M450 746h1M450 765h1M451 654h1M451 659h1M451 738h1M451 780h1M452 686h1M453 646h1M453 653h1M453 658h1M453 659h1M453 665h1M453 751h1M454 648h1M454 655h1M454 662h1M454 666h1M454 695h1M454 742h1M454 744h1M455 748h1M455 762h1M455 763h1M456 658h1M456 665h1M456 743h1M456 766h1M456 776h1M457 658h1M457 665h1M457 680h1M457 697h1M457 762h1M457 775h1M457 777h1M458 672h1M458 687h1M458 746h1M458 766h1M459 694h1M459 739h1M459 754h1M459 757h1M459 766h1M460 643h1M460 660h1M461 654h1M461 665h1M461 756h1M462 656h1M462 669h1M462 686h1M462 740h1M462 741h1M462 782h1M463 676h1M463 731h1M463 760h1M464 673h1M464 759h1M464 785h1M465 654h1M465 771h1M465 787h1M466 646h1M466 652h1M466 658h1M466 678h1M466 695h1M466 700h1M466 782h1M467 648h1M467 660h1M467 748h1M468 742h1M468 764h1M468 776h1M469 671h1M469 682h1M469 788h1M470 647h1M470 669h1M470 759h1M471 654h1M471 660h1M471 678h1M471 738h1M471 785h1M472 654h1M472 677h1M472 682h1M472 687h1M472 691h1M472 738h1M472 751h1M472 761h1M472 786h1M473 638h1M473 649h1M473 658h1M473 665h1M473 669h1M473 687h1M473 731h1M473 739h1M473 755h1M473 763h1M474 669h1M474 782h1M475 661h1M475 668h1M475 674h1M475 681h1M475 752h1M475 788h1M476 643h1M476 653h1M476 696h1M476 756h1M476 775h1M477 638h1M477 655h1M477 658h1M477 738h1M477 744h1M478 754h1M478 755h1M478 761h1M479 653h1M479 671h1M479 686h1M479 752h1M479 769h1M480 662h1M480 763h1M480 764h1M481 673h1M481 690h1M481 741h1M481 744h1M481 759h1M481 765h1M481 774h1M481 779h1M482 657h1M482 730h1M482 731h1M482 739h1M482 741h1M482 746h1M482 770h1M482 783h1M482 784h1M483 634h1M483 637h1M483 665h1M483 671h1M483 673h1M484 635h1M484 674h1M484 748h1M484 760h1M485 746h1M485 772h1M485 775h1M486 656h1M486 658h1M486 673h1M486 696h1M486 781h1M486 793h1M487 642h1M487 696h1M487 751h1M488 648h1M488 678h1M488 686h1M488 692h1M488 742h1M488 762h1M488 771h1M489 741h1M489 755h1M489 757h1M489 775h1M490 636h1M490 639h1M490 650h1M490 763h1M490 766h1M490 781h1M491 765h1M491 787h1M491 793h1M492 686h1M492 687h1M492 764h1M492 766h1M492 793h1M493 640h1M493 672h1M493 678h1M493 730h1M493 738h1M493 748h1M494 649h1M494 674h1M494 686h1M494 768h1M494 778h1M495 639h1M495 654h1M495 663h1M495 668h1M495 684h1M495 732h1M495 755h1M496 634h1M496 646h1M496 663h1M496 685h1M496 703h1M496 753h1M496 796h1M497 669h1M497 675h1M497 693h1M497 727h1M497 737h1M497 751h1M497 758h1M497 774h1M498 658h1M498 670h1M498 686h1M498 700h1M498 750h1M499 641h1M499 646h1M499 656h1M499 670h1M499 725h1M500 640h1M500 653h1M500 742h1M500 760h1M500 796h1M500 799h1M501 636h1M501 644h1M501 648h1M501 657h1M501 702h1M501 739h1M501 743h1M501 744h1M502 628h1M502 675h1M502 783h1M503 671h1M503 672h1M503 689h1M503 690h1M503 761h1M503 762h1M503 766h1M503 795h1M504 647h1M504 650h1M504 651h1M504 688h1M504 770h1M504 782h1M504 794h1M505 646h1M505 654h1M505 658h1M505 681h1M505 688h1M505 740h1M505 748h1M505 760h1M505 766h1M505 786h1M506 665h1M506 690h1M506 729h1M506 734h1M506 753h1M506 759h1M507 635h1M507 642h1M507 742h1M507 789h1M508 663h1M508 667h1M508 673h1M508 681h1M508 748h1M508 769h1M509 645h1M509 659h1M509 752h1M509 753h1M509 801h1M510 635h1M510 673h1M510 773h1M511 641h1M511 649h1M511 657h1M511 677h1M511 692h1M511 769h1M511 792h1M512 634h1M512 649h1M512 741h1M512 757h1M512 784h1M513 628h1M513 635h1M513 679h1M513 695h1M513 732h1M513 745h1M513 767h1M513 787h1M514 675h1M514 698h1M514 736h1M514 763h1M515 634h1M515 668h1M515 688h1M515 702h1M515 738h1M515 739h1M515 740h1M515 768h1M516 667h1M516 668h1M516 676h1M516 681h1M516 687h1M516 756h1M516 761h1M517 654h1M517 674h1M517 678h1M517 747h1M517 758h1M517 762h1M518 642h1M518 649h1M518 665h1M518 684h1M518 690h1M518 732h1M519 655h1M520 639h1M520 676h1M520 680h1M520 800h1M521 630h1M521 642h1M521 649h1M521 672h1M521 675h1M521 749h1M521 759h1M521 780h1M521 801h1M522 660h1M522 700h1M522 743h1M522 763h1M522 798h1M523 647h1M523 672h1M523 675h1M523 686h1M523 759h1M524 699h1M524 791h1M525 652h1M525 682h1M525 734h1M525 750h1M526 630h1M526 671h1M526 675h1M526 684h1M526 698h1M526 707h1M526 736h1M526 744h1M526 797h1M526 801h1M527 638h1M527 765h1M528 649h1M528 661h1M528 687h1M528 754h1M528 792h1M528 793h1M528 794h1M528 798h1M529 661h1M529 677h1M529 732h1M529 759h1M529 769h1M529 773h1M529 803h1M530 655h1M530 730h1M530 763h1M531 628h1M531 656h1M531 661h1M531 684h1M531 757h1M531 765h1M532 634h1M532 653h1M532 657h1M532 685h1M532 740h1M532 742h1M532 756h1M532 768h1M533 700h1M533 731h1M533 740h1M533 746h1M533 752h1M534 675h1M534 679h1M535 686h1M535 687h1M535 688h1M535 692h1M536 648h1M536 665h1M536 696h1M536 701h1M536 742h1M536 761h1M537 635h1M537 655h1M537 742h1M537 746h1M537 791h1M537 805h1M538 676h1M538 798h1M539 629h1M539 662h1M539 675h1M539 764h1M539 785h1M540 632h1M540 646h1M540 687h1M540 696h1M540 746h1M541 661h1M541 667h1M541 748h1M541 756h1M541 758h1M542 630h1M542 648h1M542 670h1M542 674h1M542 771h1M542 791h1M543 679h1M543 742h1M543 756h1M543 797h1M544 679h1M544 728h1M544 731h1M544 743h1M545 651h1M545 676h1M545 685h1M545 763h1M546 686h1M546 744h1M546 753h1M547 673h1M548 660h1M548 668h1M548 746h1M548 763h1M548 785h1M549 753h1M550 623h1M550 657h1M550 687h1M550 792h1M551 622h1M551 677h1M551 751h1M551 755h1M552 676h1M552 679h1M552 759h1M553 744h1M553 756h1M554 641h1M554 656h1M554 686h1M554 697h1M554 750h1M554 796h1M555 648h1M555 681h1M555 744h1M556 776h1M557 628h1M557 768h1M558 690h1M558 767h1M559 655h1M559 677h1M559 734h1M559 738h1M559 753h1M559 773h1M560 696h1M561 686h1M561 692h1M561 729h1M561 730h1M561 734h1M561 744h1M562 663h1M562 686h1M562 734h1M563 751h1M563 784h1M569 655h1M600 749h1M606 805h1M614 681h1M618 671h1M618 745h1M618 766h1M618 796h1M619 638h1M619 642h1M619 770h1M619 790h1M620 639h1M620 695h1M620 733h1M621 691h1M621 739h1M621 781h1M622 658h1M622 753h1M624 661h1M625 627h1M625 629h1M625 648h1M625 678h1M625 702h1M625 736h1M625 755h1M626 621h1M626 759h1M627 631h1M627 692h1M627 701h1M627 733h1M628 630h1M628 665h1M628 754h1M629 631h1M629 644h1M629 752h1M629 775h1M630 628h1M630 688h1M630 731h1M630 770h1M631 672h1M631 686h1M631 687h1M631 764h1M631 766h1M632 667h1M632 737h1M632 745h1M632 759h1M632 768h1M632 787h1M633 654h1M633 688h1M633 753h1M633 780h1M633 794h1M634 658h1M634 761h1M635 651h1M635 735h1M636 661h1M636 684h1M636 732h1M637 686h1M637 758h1M637 767h1M637 769h1M637 786h1M638 648h1M638 651h1M638 657h1M638 681h1M638 684h1M638 739h1M638 762h1M638 765h1M638 766h1M638 789h1M638 797h1M639 645h1M639 668h1M639 746h1M639 800h1M640 727h1M640 805h1M641 690h1M641 741h1M641 746h1M642 658h1M642 691h1M642 735h1M642 752h1M642 768h1M642 797h1M643 638h1M643 641h1M643 652h1M643 669h1M644 627h1M644 659h1M644 669h1M644 694h1M644 745h1M644 773h1M644 786h1M644 797h1M645 622h1M645 688h1M645 691h1M645 766h1M646 689h1M646 699h1M646 727h1M646 799h1M647 642h1M647 681h1M647 695h1M647 751h1M647 772h1M648 635h1M648 640h1M648 696h1M648 718h1M648 775h1M648 777h1M648 793h1M649 734h1M649 755h1M649 757h1M649 758h1M650 735h1M650 779h1M650 784h1M651 633h1M651 747h1M651 748h1M651 758h1M651 767h1M652 662h1M652 743h1M652 752h1M652 756h1M652 779h1M652 786h1M652 789h1M653 676h1M653 767h1M654 646h1M654 673h1M654 682h1M654 737h1M654 801h1M655 656h1M655 726h1M656 642h1M656 660h1M656 667h1M656 774h1M656 800h1M657 629h1M657 662h1M657 664h1M657 789h1M658 624h1M658 678h1M658 747h1M658 777h1M659 626h1M659 660h1M659 664h1M659 681h1M659 753h1M659 788h1M660 627h1M660 631h1M660 682h1M660 698h1M660 701h1M660 741h1M660 763h1M660 774h1M661 675h1M661 740h1M661 762h1M661 788h1M661 803h1M662 634h1M662 668h1M662 680h1M662 700h1M662 764h1M662 791h1M663 634h1M663 655h1M663 747h1M663 793h1M664 643h1M664 653h1M664 685h1M664 756h1M665 648h1M665 660h1M665 737h1M665 769h1M665 774h1M665 776h1M665 797h1M666 639h1M666 648h1M666 765h1M667 633h1M667 643h1M667 650h1M667 673h1M667 724h1M667 774h1M667 778h1M667 793h1M667 801h1M668 666h1M668 685h1M668 738h1M668 758h1M668 788h1M669 625h1M669 687h1M669 694h1M669 731h1M669 746h1M669 749h1M669 799h1M670 645h1M670 684h1M670 685h1M670 762h1M671 638h1M671 657h1M671 659h1M671 752h1M671 768h1M672 645h1M672 648h1M672 660h1M672 689h1M672 729h1M673 638h1M673 654h1M673 687h1M673 784h1M674 659h1M674 679h1M674 761h1M674 782h1M675 629h1M675 635h1M675 664h1M675 671h1M675 780h1M675 791h1M676 654h1M676 676h1M676 686h1M676 778h1M676 786h1M676 797h1M677 638h1M677 697h1M677 728h1M677 761h1M677 774h1M677 792h1M678 636h1M678 644h1M678 646h1M678 663h1M678 678h1M678 680h1M678 735h1M678 752h1M678 789h1M679 646h1M679 648h1M679 734h1M679 741h1M680 636h1M680 654h1M680 663h1M680 672h1M680 685h1M680 719h1M680 733h1M680 753h1M681 691h1M681 770h1M681 780h1M682 638h1M682 680h1M682 756h1M683 669h1M683 747h1M683 753h1M683 792h1M683 796h1M684 676h1M684 677h1M684 683h1M684 746h1M684 749h1M684 753h1M685 652h1M685 684h1M685 693h1M685 729h1M685 742h1M686 637h1M686 681h1M686 734h1M686 737h1M686 745h1M686 770h1M686 780h1M686 782h1M687 659h1M687 724h1M687 730h1M687 747h1M687 758h1M687 767h1M687 769h1M688 630h1M688 673h1M688 755h1M688 795h1M689 637h1M689 665h1M689 666h1M689 676h1M690 646h1M690 664h1M690 672h1M690 696h1M690 745h1M690 754h1M690 775h1M690 777h1M690 788h1M691 639h1M691 648h1M691 663h1M691 735h1M691 770h1M692 648h1M692 669h1M692 763h1M693 687h1M693 732h1M693 734h1M694 674h1M694 684h1M694 776h1M694 783h1M695 662h1M695 686h1M695 782h1M696 649h1M696 662h1M696 689h1M696 690h1M697 636h1M697 645h1M697 662h1M697 675h1M697 681h1M697 743h1M697 746h1M698 737h1M698 739h1M698 764h1M698 772h1M699 748h1M700 670h1M700 675h1M700 727h1M700 776h1M701 649h1M701 682h1M701 772h1M701 788h1M702 647h1M702 651h1M702 665h1M702 740h1M702 742h1M702 744h1M702 759h1M702 782h1M703 637h1M703 672h1M703 680h1M703 744h1M703 762h1M703 787h1M704 641h1M704 644h1M704 665h1M704 693h1M704 753h1M705 667h1M705 668h1M705 748h1M705 787h1M706 646h1M706 663h1M706 698h1M706 741h1M706 748h1M706 752h1M706 757h1M706 773h1M707 656h1M707 673h1M707 681h1M707 724h1M708 649h1M708 677h1M708 739h1M708 773h1M708 785h1M709 641h1M709 649h1M709 655h1M709 729h1M709 765h1M709 780h1M710 654h1M710 688h1M710 746h1M710 756h1M710 759h1M711 660h1M711 671h1M711 685h1M711 782h1M712 659h1M712 763h1M712 789h1M713 642h1M713 643h1M713 648h1M713 664h1M713 738h1M713 772h1M714 642h1M714 644h1M714 647h1M714 649h1M714 654h1M714 660h1M714 672h1M714 771h1M714 780h1M715 663h1M715 735h1M715 755h1M715 759h1M716 643h1M716 651h1M716 657h1M716 660h1M716 665h1M716 697h1M716 770h1M717 665h1M717 757h1M718 751h1M718 773h1M718 775h1M719 650h1M720 658h1M720 660h1M720 672h1M720 674h1M720 676h1M720 693h1M720 756h1M720 769h1M721 663h1M721 735h1M721 736h1M722 647h1M722 650h1M722 668h1M722 772h1M723 652h1M723 684h1M723 727h1M723 732h1M724 736h1M725 654h1M725 666h1M725 750h1M725 768h1M725 769h1M726 650h1M726 660h1M726 661h1M726 685h1M726 689h1M726 745h1M726 752h1M726 776h1M726 780h1M726 782h1M727 675h1M727 679h1M727 775h1M728 653h1M728 695h1M728 742h1M728 748h1M728 760h1M728 781h1M728 782h1M729 646h1M729 689h1M729 751h1M729 766h1M729 767h1M730 670h1M731 703h1M731 734h1M731 741h1M732 655h1M732 781h1M733 751h1M733 779h1M734 672h1M734 771h1M735 655h1M735 685h1M735 766h1M736 776h1M737 655h1M737 676h1M737 683h1M737 740h1M737 753h1M738 655h1M738 661h1M739 675h1M739 694h1M740 654h1M740 671h1M740 679h1M740 683h1M740 740h1M740 759h1M741 678h1M742 764h1M743 673h1M743 675h1M743 755h1M743 757h1M744 662h1M744 685h1M744 747h1M746 684h1M746 685h1M747 684h1M747 692h1M747 760h1M748 671h1M748 768h1M749 677h1M749 732h1M749 752h1M750 665h1M751 679h1M751 701h1M751 764h1M752 662h1M752 679h1M752 747h1M753 663h1M753 671h1M754 675h1M754 693h1M754 764h1M755 675h1M755 686h1M755 749h1M755 759h1M755 761h1M756 691h1M757 692h1M757 746h1M758 735h1M759 749h1M760 686h1M761 750h1M762 734h1M762 750h1M764 674h1M764 752h1M765 673h1M765 752h1M766 742h1M766 744h1M768 686h1M768 738h1M771 746h1M772 736h1M773 724h1M774 687h1M775 738h1M783 724h1" transform="translate(0,0.5)" fill="none" stroke="#0a700a" stroke-width="1" shape-rendering="crispEdges"/>
<g fill="none" stroke="#fff" stroke-width="1" shape-rendering="crispEdges">
<ellipse cx="591.5" cy="642" rx="254" ry="126.5"/>
<ellipse cx="591.5" cy="678.5" rx="246.5" ry="123"/>
<ellipse cx="591.5" cy="715" rx="239" ry="119"/>
</g>
<defs><clipPath id="dc"><ellipse cx="591.5" cy="714.2" rx="204" ry="100.7"/></clipPath></defs>
<g fill="none" stroke="#b4ffb4" stroke-width="1" shape-rendering="crispEdges" clip-path="url(#dc)">
<ellipse cx="591.5" cy="642" rx="254" ry="126.5"/>
<ellipse cx="591.5" cy="678.5" rx="246.5" ry="123"/>
</g>
<path d="M718.1 751.7 L710.6 818.2" fill="none" stroke="#d8ffd8" stroke-width="1" shape-rendering="crispEdges"/>
<g fill="none" stroke="#fff" stroke-width="1"><path d="M595.5 586.5 L601.5 586.5 L596.5 594.5"/><path d="M569.5 607.5 L572.5 611.5 L576.5 607.5"/><circle cx="591.5" cy="605.5" r="3"/><path d="M591.5 608.5 L591.5 611"/></g>
<g fill="none" stroke="#dc2828" stroke-width="3" stroke-dasharray="3 3">
<path d="M591.5 275 L591.5 611"/>
<path d="M591.5 611 L591.5 714" stroke="#a04a14"/>
<path d="M591.5 275 L758.5 210"/>
<path d="M758.5 210 L758.5 392"/>
</g>
<path d="M758.5 392 L758.5 566" fill="none" stroke="#e43070" stroke-width="3" stroke-dasharray="3 3"/>
<path d="M758.5 567 L758.5 606" fill="none" stroke="#80c0ff" stroke-width="1" stroke-dasharray="5 2"/>
<g fill="none" stroke="#1a1ae0" stroke-width="2.2">
<ellipse cx="758.5" cy="497" rx="42.5" ry="22"/>
<ellipse cx="758.5" cy="571" rx="42.5" ry="21.6"/>
<path d="M721.2 508 L721.2 584"/>
<path d="M737.3 478 L737.3 565 Q740 590 750 603"/>
<path d="M779.6 516 L779.6 592"/>
<path d="M795.4 488 L795.4 560 Q792 585 775 608"/>
<path d="M716 571 Q722 600 765 611 Q795 605 801 571"/>
<path d="M721.2 584 Q740 608 770 611"/>
<path d="M779.6 592 Q778 604 770 611"/>
</g>
</svg>
<svg class="abs" style="left:1184px;top:70px" width="90" height="8" viewBox="1184 70 90 8" shape-rendering="crispEdges"><path d="M1194 75.5h1M1204 75.5h1M1207 75.5h14M1227 75.5h6M1236 75.5h1M1246 75.5h1M1249 75.5h1M1255 75.5h7M1214 74.5h6M1223 74.5h2M1228 74.5h5M1236 74.5h4M1243 74.5h2M1246 74.5h1M1249 74.5h1M1253 74.5h1M1258 74.5h3" stroke="#fff" stroke-width="1" fill="none"/></svg>
<div class="b p" style="left:1184px;top:82px;width:45px;height:23px;padding:0"><div class="abs" style="left:0;top:0;width:38px;height:16px;border-right:1px solid #000;border-bottom:1px solid #000"></div><div class="abs" style="left:9px;top:3px;width:21px;height:9px;background:#f00"></div></div>
<div class="b p" style="left:1229px;top:82px;width:45px;height:23px;padding:0"><div class="abs" style="left:2px;top:1px;width:37px;height:14px;background:#90c8c8"></div><div class="abs" style="left:3px;top:1px;color:#a060c0;letter-spacing:0;width:40px;overflow:hidden"><i class="g g8457">著</i><i class="g g8272">色</i></div></div>
<div class="b u" style="left:1184px;top:105px;width:45px;height:23px;color:#fff"><i class="g g8996">視</i><i class="g g7A97">窗</i></div>
<div class="b u" style="left:1229px;top:105px;width:45px;height:23px;color:#fff"><i class="g g9A57">驗</i><i class="g g8B49">證</i></div>
<div class="b u" style="left:1184px;top:128px;width:45px;height:23px;color:#fff"><i class="g g5EA7">座</i><i class="g g6A19">標</i></div>
<div class="b u" style="left:1229px;top:128px;width:45px;height:23px;color:#fff"><i class="g g8A0A">訊</i><i class="g g606F">息</i></div>
<div class="b u" style="left:1184px;top:151px;width:45px;height:23px;color:#fff"><i class="g g8907">複</i><i class="g g9078">選</i></div>
<div class="b u" style="left:1229px;top:151px;width:45px;height:23px;color:#fff"><i class="g g9396">鎖</i><i class="g g5B9A">定</i></div>
<div class="b u" style="left:1184px;top:174px;width:45px;height:23px;color:#fff"><i class="g g5C6C">屬</i><i class="g g6027">性</i></div>
<div class="b u" style="left:1229px;top:174px;width:45px;height:23px;color:#fff"> <i class="g g5C64">層</i></div>
<div class="b t" style="left:1184px;top:207px;width:90px;height:23px"><i class="g h g4E">N</i> <i class="g h g43">C</i> <i class="g g52A0">加</i><i class="g g5DE5">工</i></div>
<div class="b t" style="left:1184px;top:230px;width:90px;height:23px"><i class="g g8DEF">路</i><i class="g g5F91">徑</i><i class="g g7BA1">管</i><i class="g g7406">理</i></div>
<div class="b t y" style="left:1184px;top:286px;width:90px;height:23px"><i class="g g8DEF">路</i><i class="g g5F91">徑</i><i class="g g7BA1">管</i><i class="g g7406">理</i></div>
<div class="b l" style="left:1184px;top:309px;width:90px;height:23px"> <i class="g g7DDA">線</i><i class="g g5207">切</i><i class="g g5272">割</i></div>
<div class="b l" style="left:1184px;top:332px;width:90px;height:23px"></div>
<div class="b l" style="left:1184px;top:355px;width:90px;height:23px"></div>
<div class="b l" style="left:1184px;top:378px;width:90px;height:23px"></div>
<div class="b l" style="left:1184px;top:401px;width:90px;height:23px"></div>
<div class="b l" style="left:1184px;top:424px;width:90px;height:23px"> <i class="g g5200">刀</i> <i class="g g5177">具</i></div>
<div class="b l" style="left:1184px;top:447px;width:90px;height:23px"> <i class="g g5200">刀</i><i class="g g5177">具</i><i class="g g5EAB">庫</i></div>
<div class="b l" style="left:1184px;top:470px;width:90px;height:23px"></div>
<div class="b l" style="left:1184px;top:493px;width:90px;height:23px"><i class="g g8DEF">路</i><i class="g g5F91">徑</i><i class="g g8907">複</i><i class="g g88FD">製</i></div>
<div class="b l" style="left:1184px;top:516px;width:90px;height:23px"></div>
<div class="b l" style="left:1184px;top:539px;width:90px;height:23px"><i class="g g6A5F">機</i><i class="g g68B0">械</i><i class="g g7CFB">系</i><i class="g g7D71">統</i></div>
<div class="b t" style="left:1184px;top:572px;width:90px;height:23px"><i class="g g53D6">取</i><i class="g g6D88">消</i><i class="g g524D">前</i><i class="g g4EE4">令</i></div>
<div class="b t" style="left:1184px;top:595px;width:90px;height:23px"> <i class="g g522A">刪</i> <i class="g g9664">除</i></div>
<div class="b t" style="left:1184px;top:618px;width:90px;height:23px"> <i class="g g96B1">隱</i> <i class="g g85CF">藏</i></div>
<div class="b t" style="left:1184px;top:641px;width:90px;height:23px">   <i class="g g5C64">層</i></div>
<div class="b t" style="left:1184px;top:664px;width:90px;height:23px"> <i class="g g7DDA">線</i><i class="g g5C6C">屬</i><i class="g g6027">性</i></div>
<div class="b t" style="left:1184px;top:687px;width:90px;height:23px"> <i class="g g5EA7">座</i><i class="g g6A19">標</i><i class="g g7CFB">系</i></div>
<div class="b t" style="left:1184px;top:710px;width:90px;height:23px"> <i class="g g6A94">檔</i> <i class="g g6848">案</i></div>
<div class="b t" style="left:1184px;top:733px;width:90px;height:23px"> <i class="g g8996">視</i> <i class="g g7A97">窗</i></div>
<div class="b t" style="left:1184px;top:756px;width:90px;height:23px"><div class="abs" style="left:2px;top:1px;width:80px;height:13px;background:#fff"></div><span style="position:relative;color:#2e6462"> <i class="g g9A57">驗</i> <i class="g g8B49">證</i></span></div>
<div class="b t" style="left:1184px;top:779px;width:90px;height:23px">  <i class="g h g4D">M</i><i class="g h g50">P</i><i class="g h g44">D</i><i class="g h g4D">M</i></div>
<div class="b t" style="left:1184px;top:802px;width:90px;height:23px"> <i class="g g96E2">離</i> <i class="g g958B">開</i></div>
<div class="b t" style="left:4px;top:976px;width:160px;height:23px"><i class="g h g58">X</i><i class="g h g3D">=</i><i class="g h g32">2</i><i class="g h g34">4</i><i class="g h g2E">.</i><i class="g h g38">8</i><i class="g h g32">2</i><i class="g h g32">2</i></div>
<div class="b t" style="left:164px;top:976px;width:160px;height:23px"><i class="g h g59">Y</i><i class="g h g3D">=</i><i class="g h g33">3</i><i class="g h g2E">.</i><i class="g h g34">4</i><i class="g h g32">2</i><i class="g h g31">1</i></div>
<div class="b t" style="left:324px;top:976px;width:160px;height:23px"><i class="g h g5A">Z</i><i class="g h g3D">=</i><i class="g h g2D">-</i><i class="g h g34">4</i><i class="g h g2E">.</i><i class="g h g32">2</i><i class="g h g33">3</i><i class="g h g38">8</i></div>
<div class="b l" style="left:484px;top:976px;width:160px;height:23px"><i class="g g9032">進</i><i class="g g7D66">給</i><i class="g h g3D">=</i><i class="g h g31">1</i><i class="g h g30">0</i><i class="g h g35">5</i><i class="g h g2E">.</i><i class="g h g30">0</i><i class="g h g30">0</i><i class="g h g30">0</i></div>
<div class="b l" style="left:644px;top:976px;width:160px;height:23px"><i class="g g8F49">轉</i><i class="g g901F">速</i><i class="g h g3D">=</i><i class="g h g31">1</i><i class="g h g30">0</i><i class="g h g30">0</i><i class="g h g30">0</i></div>
<div class="b l" style="left:804px;top:976px;width:160px;height:23px"><i class="g g51B7">冷</i><i class="g g537B">卻</i><i class="g g95DC">關</i><i class="g g9589">閉</i></div>
<div class="b t" style="left:964px;top:976px;width:160px;height:23px"><i class="g h g54">T</i><i class="g h g3D">=</i><i class="g h g31">1</i><i class="g h g30">0</i><i class="g h g42">B</i></div>
<div class="b l" style="left:4px;top:999px;width:160px;height:22px"></div>
<div class="b l" style="left:164px;top:999px;width:160px;height:22px"></div>
<div class="b l" style="left:324px;top:999px;width:160px;height:22px"></div>
<div class="b l" style="left:484px;top:999px;width:160px;height:22px"><i class="g h g54">T</i><i class="g h g50">P</i><i class="g h g3D">=</i><i class="g h g31">1</i><i class="g h g30">0</i><i class="g h g42">B</i></div>
<div class="b l" style="left:644px;top:999px;width:160px;height:22px"><i class="g h g33">3</i><i class="g g8EF8">軸</i><i class="g g9291">銑</i><i class="g g5E8A">床</i></div>
<div class="b l" style="left:804px;top:999px;width:160px;height:22px"><i class="g g53E3">口</i><i class="g g888B">袋</i><i class="g g6295">投</i><i class="g g5F71">影</i><i class="g h g3D">=</i><i class="g h g32">2</i></div>
<div class="b l" style="left:964px;top:999px;width:160px;height:22px"><i class="g g55AE">單</i><i class="g g7BC0">節</i><i class="g h g3D">=</i><i class="g h g31">1</i><i class="g h g34">4</i></div>
<div class="abs" style="left:1060px;top:1001px;height:18px;font:italic bold 13px/18px 'Liberation Sans',sans-serif;color:#e42424;white-space:pre;text-shadow:-1px 0 #fff,1px 0 #fff,0 -1px #fff,0 1px #fff,-1px -1px #fee,1px 1px #fee,1px -1px #fee,-1px 1px #fee"><span style="display:inline-block;width:53px;height:18px;overflow:hidden;vertical-align:top;filter:drop-shadow(1px 0 0 #e42424) drop-shadow(0 1px 0 #e42424) drop-shadow(1px 0 0 #fff) drop-shadow(-1px 0 0 #fff) drop-shadow(0 1px 0 #fff) drop-shadow(0 -1px 0 #fff)"><span style="display:inline-block;white-space:nowrap;transform:translate(1px,-1px) skewX(-8deg) scale(0.84,0.72);transform-origin:0 100%"><i class="g g4E09">三</i><i class="g g7EF4">维</i><i class="g g7F51">网</i></span></span><span style="display:inline-block;transform:scaleX(1.42);transform-origin:0 50%;vertical-align:top">www.3dportal.cn</span></div>
</body></html>
